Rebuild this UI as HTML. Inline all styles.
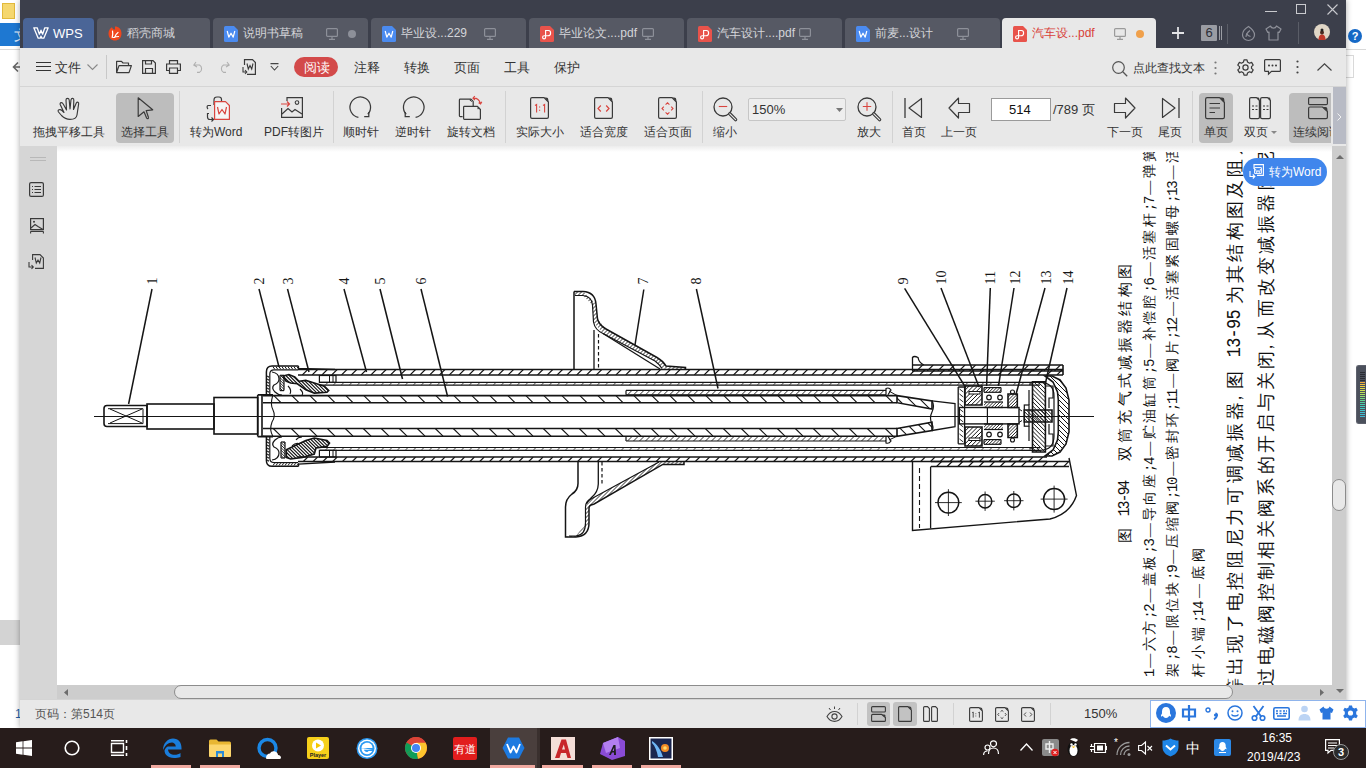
<!DOCTYPE html>
<html><head><meta charset="utf-8">
<style>
*{margin:0;padding:0;box-sizing:border-box}
html,body{width:1366px;height:768px;overflow:hidden;background:#fff;font-family:"Liberation Sans",sans-serif;position:relative}
.a{position:absolute}
.t{position:absolute;white-space:nowrap;line-height:1}
svg{position:absolute;overflow:visible}
/* window */
#win{left:20px;top:0;width:1326px;height:728px;background:#e8e8e8;box-shadow:0 0 6px rgba(0,0,0,.35)}
#title{left:0;top:0;width:1326px;height:48px;background:#3c3f4b}
.tab{position:absolute;top:18px;height:30px;width:155px;background:#565964;border-radius:4px 4px 0 0}
.tab .tx{position:absolute;left:30px;top:8px;font-size:12px;color:#d4d5d9;white-space:nowrap;line-height:14px}
#menu{left:0;top:48px;width:1326px;height:39px;background:#e8e8e8;border-bottom:1px solid #d5d5d5}
.mi{position:absolute;top:61px;font-size:13px;color:#333;line-height:13px;white-space:nowrap}
#tool{left:0;top:87px;width:1326px;height:59px;background:#e8e8e8}
.tl{position:absolute;top:126px;font-size:12px;color:#333;line-height:12px;white-space:nowrap}
.sep{position:absolute;width:1px;background:#d2d2d2}
#side{left:0;top:146px;width:37px;height:553px;background:#d6d6d6}
#doc{left:37px;top:146px;width:1275px;height:539px;background:#fff;overflow:hidden}
#vs{left:1312px;top:146px;width:14px;height:553px;background:#cdcdcd}
#hs{left:37px;top:685px;width:1275px;height:14px;background:#cdcdcd}
#status{left:0;top:699px;width:1326px;height:29px;background:#e8e8e8}
#task{left:0;top:728px;width:1366px;height:40px;background:#271c1b}
</style></head><body>

<!-- desktop leftovers -->
<div class="a" style="left:2px;top:3px;width:13px;height:16px;background:#f5d76e;border:1px solid #e2b93b"></div>
<div class="a" style="left:0;top:23px;width:20px;height:23px;background:#1e78d2"></div>
<div class="t" style="left:14px;top:28px;font-size:14px;color:#e8f0ff">文</div>
<div class="a" style="left:0;top:49px;width:20px;height:1px;background:#d9d9d9"></div>
<svg style="left:12px;top:61px" width="9" height="12" viewBox="0 0 9 12"><path d="M8 6H1.5M6 1.5L1.5 6L6 10.5" stroke="#666" stroke-width="1.6" fill="none"/></svg>
<div class="a" style="left:0;top:620px;width:20px;height:25px;background:#d3d3d3"></div>
<div class="t" style="left:15px;top:708px;font-size:12px;color:#1e5fa8">1</div>
<div class="a" style="left:1346px;top:49px;width:20px;height:1px;background:#d9d9d9"></div>
<div class="a" style="left:1346px;top:55px;width:8px;height:23px;border:1px solid #d9d9d9;border-left:none"></div>
<div class="a" style="left:1348px;top:29px;width:14px;height:14px;border-radius:50%;background:#1569c7;color:#fff;font-size:11px;font-weight:bold;text-align:center;line-height:14px">?</div>
<div class="a" style="left:1356px;top:365px;width:10px;height:59px;background:#4b505c;border-radius:3px 0 0 3px;border:1px solid #5d616c;border-right:none"><div class="a" style="left:3px;top:6px;width:5px;height:1px;background:#2a2c33"></div><div class="a" style="left:3px;top:8px;width:5px;height:1px;background:#2a2c33"></div><div class="a" style="left:3px;top:10px;width:5px;height:1px;background:#2a2c33"></div><div class="a" style="left:3px;top:12px;width:5px;height:1px;background:#2a2c33"></div><div class="a" style="left:3px;top:14px;width:5px;height:1px;background:#2a2c33"></div><div class="a" style="left:3px;top:16px;width:5px;height:1px;background:#f2ab3c"></div><div class="a" style="left:3px;top:18px;width:5px;height:1px;background:#f0c040"></div><div class="a" style="left:3px;top:20px;width:5px;height:1px;background:#ecd040"></div><div class="a" style="left:3px;top:22px;width:5px;height:1px;background:#e0dc48"></div><div class="a" style="left:3px;top:24px;width:5px;height:1px;background:#d0e050"></div><div class="a" style="left:3px;top:26px;width:5px;height:1px;background:#bfe058"></div><div class="a" style="left:3px;top:28px;width:5px;height:1px;background:#a8e060"></div><div class="a" style="left:3px;top:30px;width:5px;height:1px;background:#90dc70"></div><div class="a" style="left:3px;top:32px;width:5px;height:1px;background:#78d880"></div><div class="a" style="left:3px;top:34px;width:5px;height:1px;background:#60d490"></div><div class="a" style="left:3px;top:36px;width:5px;height:1px;background:#50d0a0"></div><div class="a" style="left:3px;top:38px;width:5px;height:1px;background:#48cfb0"></div><div class="a" style="left:3px;top:40px;width:5px;height:1px;background:#40ccb8"></div><div class="a" style="left:3px;top:42px;width:5px;height:1px;background:#40c8c0"></div><div class="a" style="left:3px;top:44px;width:5px;height:1px;background:#40c4c8"></div><div class="a" style="left:3px;top:46px;width:5px;height:1px;background:#40c0d0"></div><div class="a" style="left:3px;top:48px;width:5px;height:1px;background:#40bcd0"></div><div class="a" style="left:3px;top:50px;width:5px;height:1px;background:#40b8d0"></div></div>

<div id="win" class="a">
  <div id="title" class="a"></div>
<div class="tab" style="left:3px;width:71px;background:#4a6597"></div>
<svg style="left:13px;top:27px" width="16" height="12" viewBox="0 0 16 12"><path d="M0.8 0.8H4.2L6.4 7.2L8 3.2L9.6 7.2L11.8 0.8H15.2L10.8 11.2H8.8L8 9.2L7.2 11.2H5.2Z" stroke="#fff" stroke-width="1.3" fill="none" stroke-linejoin="round"/></svg>
<div class="t" style="left:33px;top:27px;font-size:13px;color:#fff;line-height:14px">WPS</div>
<div class="tab" style="left:77px;width:113px"><div class="tx" style="left:30px">稻壳商城</div></div>
<svg style="left:88px;top:26px" width="14" height="15" viewBox="0 0 14 15"><path d="M7 0.5C10.5 0.5 13.5 3 13.5 7.5C13.5 12 10.5 14.5 7 14.5C3.5 14.5 0.5 12 0.5 7.5C0.5 4 2.5 2 4 1.2C4.5 2.8 5.5 3.5 7 3.5Z" fill="#f0461c"/><path d="M4.2 11.5C4.8 9 5 7 4.5 5M6.5 11.5C7.5 9 8.5 7.5 10 6.5M5.5 11.5C7 11 9 10.5 10.5 10.5" stroke="#fff" stroke-width="1.2" fill="none" stroke-linecap="round"/></svg>
<div class="tab" style="left:193px"><div class="tx">说明书草稿</div></div>
<svg style="left:204px;top:26px" width="14" height="16" viewBox="0 0 14 16"><path d="M1.5 0H10L14 4V14.5Q14 16 12.5 16H1.5Q0 16 0 14.5V1.5Q0 0 1.5 0Z" fill="#4b8bf0"/><path d="M3.2 5L4.8 11.2L7 7.2L9.2 11.2L10.8 5" stroke="#fff" stroke-width="1.2" fill="none" stroke-linejoin="round"/></svg>
<div class="tab" style="left:351px"><div class="tx">毕业设...229</div></div>
<svg style="left:362px;top:26px" width="14" height="16" viewBox="0 0 14 16"><path d="M1.5 0H10L14 4V14.5Q14 16 12.5 16H1.5Q0 16 0 14.5V1.5Q0 0 1.5 0Z" fill="#4b8bf0"/><path d="M3.2 5L4.8 11.2L7 7.2L9.2 11.2L10.8 5" stroke="#fff" stroke-width="1.2" fill="none" stroke-linejoin="round"/></svg>
<div class="tab" style="left:509px"><div class="tx">毕业论文....pdf</div></div>
<svg style="left:520px;top:26px" width="14" height="16" viewBox="0 0 14 16"><path d="M1.5 0H10L14 4V14.5Q14 16 12.5 16H1.5Q0 16 0 14.5V1.5Q0 0 1.5 0Z" fill="#e8534b"/><path d="M5.6 11.3V4.5H8.5Q10.6 4.6 10.6 6.9Q10.6 9.7 8 9.7H4.2Q2.6 9.7 2.6 11.3Q2.6 12.9 4.1 12.9Q5.6 12.9 5.6 11.3" stroke="#fff" stroke-width="1.15" fill="none"/></svg>
<div class="tab" style="left:667px"><div class="tx">汽车设计....pdf</div></div>
<svg style="left:678px;top:26px" width="14" height="16" viewBox="0 0 14 16"><path d="M1.5 0H10L14 4V14.5Q14 16 12.5 16H1.5Q0 16 0 14.5V1.5Q0 0 1.5 0Z" fill="#e8534b"/><path d="M5.6 11.3V4.5H8.5Q10.6 4.6 10.6 6.9Q10.6 9.7 8 9.7H4.2Q2.6 9.7 2.6 11.3Q2.6 12.9 4.1 12.9Q5.6 12.9 5.6 11.3" stroke="#fff" stroke-width="1.15" fill="none"/></svg>
<div class="tab" style="left:825px"><div class="tx">前麦...设计</div></div>
<svg style="left:836px;top:26px" width="14" height="16" viewBox="0 0 14 16"><path d="M1.5 0H10L14 4V14.5Q14 16 12.5 16H1.5Q0 16 0 14.5V1.5Q0 0 1.5 0Z" fill="#4b8bf0"/><path d="M3.2 5L4.8 11.2L7 7.2L9.2 11.2L10.8 5" stroke="#fff" stroke-width="1.2" fill="none" stroke-linejoin="round"/></svg>
<svg style="left:306px;top:28px" width="12" height="12" viewBox="0 0 12 12"><rect x="0.6" y="0.6" width="10.8" height="7.8" rx="1" stroke="#8d9099" stroke-width="1.2" fill="none"/><path d="M6 8.5V11M3 11.4H9" stroke="#8d9099" stroke-width="1.2"/></svg>
<div class="a" style="left:328px;top:30px;width:8px;height:8px;border-radius:50%;background:#8d9099"></div>
<svg style="left:464px;top:28px" width="12" height="12" viewBox="0 0 12 12"><rect x="0.6" y="0.6" width="10.8" height="7.8" rx="1" stroke="#8d9099" stroke-width="1.2" fill="none"/><path d="M6 8.5V11M3 11.4H9" stroke="#8d9099" stroke-width="1.2"/></svg>
<svg style="left:622px;top:28px" width="12" height="12" viewBox="0 0 12 12"><rect x="0.6" y="0.6" width="10.8" height="7.8" rx="1" stroke="#8d9099" stroke-width="1.2" fill="none"/><path d="M6 8.5V11M3 11.4H9" stroke="#8d9099" stroke-width="1.2"/></svg>
<svg style="left:779px;top:28px" width="12" height="12" viewBox="0 0 12 12"><rect x="0.6" y="0.6" width="10.8" height="7.8" rx="1" stroke="#8d9099" stroke-width="1.2" fill="none"/><path d="M6 8.5V11M3 11.4H9" stroke="#8d9099" stroke-width="1.2"/></svg>
<svg style="left:937px;top:28px" width="12" height="12" viewBox="0 0 12 12"><rect x="0.6" y="0.6" width="10.8" height="7.8" rx="1" stroke="#8d9099" stroke-width="1.2" fill="none"/><path d="M6 8.5V11M3 11.4H9" stroke="#8d9099" stroke-width="1.2"/></svg>
<div class="tab" style="left:982px;width:154px;background:#e8e8e8"></div>
<svg style="left:993px;top:26px" width="14" height="16" viewBox="0 0 14 16"><path d="M1.5 0H10L14 4V14.5Q14 16 12.5 16H1.5Q0 16 0 14.5V1.5Q0 0 1.5 0Z" fill="#e8534b"/><path d="M5.6 11.3V4.5H8.5Q10.6 4.6 10.6 6.9Q10.6 9.7 8 9.7H4.2Q2.6 9.7 2.6 11.3Q2.6 12.9 4.1 12.9Q5.6 12.9 5.6 11.3" stroke="#fff" stroke-width="1.15" fill="none"/></svg>
<div class="t" style="left:1012px;top:26px;font-size:12px;color:#d8413a;line-height:14px">汽车设...pdf</div>
<svg style="left:1094px;top:28px" width="12" height="12" viewBox="0 0 12 12"><rect x="0.6" y="0.6" width="10.8" height="7.8" rx="1" stroke="#9a9a9a" stroke-width="1.2" fill="none"/><path d="M6 8.5V11M3 11.4H9" stroke="#9a9a9a" stroke-width="1.2"/></svg>
<div class="a" style="left:1116px;top:30px;width:8px;height:8px;border-radius:50%;background:#f0a04b"></div>
<svg style="left:1151px;top:26px" width="14" height="14" viewBox="0 0 14 14"><path d="M7 1V13M1 7H13" stroke="#e3e3e6" stroke-width="1.8"/></svg>
<div class="a" style="left:1181px;top:25px;width:16px;height:16px;background:#9a9ca3;border-radius:1px;color:#2c2e36;font-size:13px;text-align:center;line-height:16px">6</div>
<div class="a" style="left:1199px;top:26px;width:1px;height:14px;background:#9a9ca3"></div>
<div class="a" style="left:1201px;top:26px;width:1px;height:14px;background:#9a9ca3"></div>
<div class="a" style="left:1207px;top:24px;width:1px;height:20px;background:#5a5d67"></div>
<svg style="left:1221px;top:25px" width="15" height="16" viewBox="0 0 15 16"><path d="M7.5 1.5C3 4 1.5 7 1.5 10A6 5.5 0 0 0 13.5 10C13.5 7 12 4.5 7.5 1.5Z" stroke="#8e9099" stroke-width="1.2" fill="none"/><path d="M5 12C5 9 7 7 9 5.5M5.5 8C6 9.5 7 11 9.5 11.5" stroke="#8e9099" stroke-width="1.1" fill="none"/></svg>
<svg style="left:1245px;top:25px" width="17" height="16" viewBox="0 0 17 16"><path d="M5.5 1L1 4L2.8 7.5L4 7V15H13V7L14.2 7.5L16 4L11.5 1C11 2.5 10 3.2 8.5 3.2S6 2.5 5.5 1Z" stroke="#8e9099" stroke-width="1.2" fill="none" stroke-linejoin="round"/></svg>
<div class="a" style="left:1278px;top:22px;width:1px;height:22px;background:#5a5d67"></div>
<svg style="left:1294px;top:24px" width="16" height="16" viewBox="0 0 16 16"><circle cx="8" cy="8" r="8" fill="#e0d6c6"/><path d="M4.5 16C4.5 12 6 10.5 8 10.5S11.5 12 11.5 16Z" fill="#c0392b"/><circle cx="8" cy="8.5" r="2" fill="#4a2a20"/><circle cx="8" cy="6" r="1.5" fill="#222"/></svg>
<div class="a" style="left:1245px;top:11px;width:12px;height:1px;background:#c9cace"></div>
<div class="a" style="left:1276px;top:4px;width:10px;height:10px;border:1px solid #c9cace"></div>
<svg style="left:1307px;top:4px" width="11" height="11" viewBox="0 0 11 11"><path d="M0.5 0.5L10.5 10.5M10.5 0.5L0.5 10.5" stroke="#c9cace" stroke-width="1.1"/></svg>
  <div id="menu" class="a"></div>
<svg style="left:16px;top:62px" width="15" height="10" viewBox="0 0 15 10"><path d="M0 0.5H15M0 4.5H15M0 8.5H15" stroke="#333" stroke-width="1"/></svg>
<div class="mi" style="left:35px">文件</div>
<svg style="left:67px;top:64px" width="11" height="6" viewBox="0 0 11 6"><path d="M0.5 0.5L5.5 5.5L10.5 0.5" stroke="#888" stroke-width="1.1" fill="none"/></svg>
<div class="a" style="left:86px;top:55px;width:1px;height:24px;background:#c8c8c8"></div>
<svg style="left:96px;top:60px" width="16" height="14" viewBox="0 0 16 14"><path d="M0.6 12.6V1.4H5.5L7 3H12.5V5.5M0.6 12.6L3 5.6H15.4L13 12.6Z" stroke="#3a3a3a" stroke-width="1.2" fill="none" stroke-linejoin="round"/></svg>
<svg style="left:122px;top:60px" width="14" height="14" viewBox="0 0 14 14"><path d="M0.6 0.6H11L13.4 3V13.4H0.6Z M3.5 13.4V8.5H10.5V13.4 M3.5 0.6V4H9.5V0.6" stroke="#3a3a3a" stroke-width="1.2" fill="none"/></svg>
<svg style="left:146px;top:60px" width="15" height="14" viewBox="0 0 15 14"><path d="M3.5 4V0.6H11.5V4 M3.5 10.5H0.6V4H14.4V10.5H11.5 M3.5 8V13.4H11.5V8Z" stroke="#3a3a3a" stroke-width="1.2" fill="none"/></svg>
<svg style="left:173px;top:61px" width="12" height="12" viewBox="0 0 12 12"><path d="M3 1L0.8 4L4 6M1 4H6.5A4.3 4.3 0 0 1 6.5 11.4H4" stroke="#b0b0b0" stroke-width="1.1" fill="none"/></svg>
<svg style="left:198px;top:61px" width="12" height="12" viewBox="0 0 12 12"><path d="M9 1L11.2 4L8 6M11 4H5.5A4.3 4.3 0 0 0 5.5 11.4H8" stroke="#b0b0b0" stroke-width="1.1" fill="none"/></svg>
<svg style="left:221px;top:59px" width="16" height="16" viewBox="0 0 16 16"><path d="M3.5 6V0.6H11.5L14.4 3.5V15.4H6 M3.5 1L3.5 6" stroke="#3a3a3a" stroke-width="1.2" fill="none"/><path d="M6 4.5L7.3 10L9 6.5L10.7 10L12 4.5" stroke="#3a3a3a" stroke-width="1.1" fill="none"/><path d="M2 8V13H5.5M4 11L5.8 13L4 15" stroke="#3a3a3a" stroke-width="1.1" fill="none"/></svg>
<svg style="left:250px;top:63px" width="9" height="8" viewBox="0 0 9 8"><path d="M0.5 0.6H8.5M0.8 3L4.5 7L8.2 3" stroke="#444" stroke-width="1.1" fill="none"/></svg>
<div class="a" style="left:274px;top:57px;width:44px;height:20px;border-radius:10px;background:#d34a4a"></div>
<div class="mi" style="left:284px;top:61px;color:#fff">阅读</div>
<div class="mi" style="left:334px">注释</div>
<div class="mi" style="left:384px">转换</div>
<div class="mi" style="left:434px">页面</div>
<div class="mi" style="left:484px">工具</div>
<div class="mi" style="left:534px">保护</div>
<svg style="left:1092px;top:61px" width="16" height="16" viewBox="0 0 16 16"><circle cx="6.5" cy="6.5" r="5.8" stroke="#555" stroke-width="1.2" fill="none"/><path d="M10.8 10.8L15.2 15.2" stroke="#555" stroke-width="1.3"/></svg>
<div class="mi" style="left:1113px;top:62px;font-size:12px;color:#333">点此查找文本</div>
<svg style="left:1194px;top:61px" width="3" height="14" viewBox="0 0 3 14"><circle cx="1.5" cy="1.5" r="1.1" fill="#777"/><circle cx="1.5" cy="7" r="1.1" fill="#777"/><circle cx="1.5" cy="12.5" r="1.1" fill="#777"/></svg>
<svg style="left:1217px;top:59px" width="17" height="17" viewBox="0 0 17 17"><path d="M7 0.8H10L10.5 3L12.5 4.2L14.6 3.4L16.2 6.1L14.5 7.6V9.4L16.2 10.9L14.6 13.6L12.5 12.8L10.5 14L10 16.2H7L6.5 14L4.5 12.8L2.4 13.6L0.8 10.9L2.5 9.4V7.6L0.8 6.1L2.4 3.4L4.5 4.2L6.5 3Z" stroke="#3a3a3a" stroke-width="1.2" fill="none" stroke-linejoin="round"/><circle cx="8.5" cy="8.5" r="2.6" stroke="#3a3a3a" stroke-width="1.2" fill="none"/></svg>
<svg style="left:1244px;top:59px" width="17" height="16" viewBox="0 0 17 16"><path d="M1.5 0.6H15.5Q16.4 0.6 16.4 1.5V11.5Q16.4 12.4 15.5 12.4H7.5L4.5 15.2V12.4H1.5Q0.6 12.4 0.6 11.5V1.5Q0.6 0.6 1.5 0.6Z" stroke="#3a3a3a" stroke-width="1.2" fill="none"/><circle cx="5" cy="6.5" r="1" fill="#3a3a3a"/><circle cx="8.5" cy="6.5" r="1" fill="#3a3a3a"/><circle cx="12" cy="6.5" r="1" fill="#3a3a3a"/></svg>
<svg style="left:1276px;top:60px" width="3" height="14" viewBox="0 0 3 14"><circle cx="1.5" cy="1.5" r="1.1" fill="#444"/><circle cx="1.5" cy="7" r="1.1" fill="#444"/><circle cx="1.5" cy="12.5" r="1.1" fill="#444"/></svg>
<svg style="left:1297px;top:63px" width="15" height="8" viewBox="0 0 15 8"><path d="M0.5 7.5L7.5 0.8L14.5 7.5" stroke="#444" stroke-width="1.2" fill="none"/></svg>
  <div id="tool" class="a"></div>
<div class="a" style="left:96px;top:93px;width:58px;height:50px;border-radius:4px;background:#bdbdbd"></div>
<div class="a" style="left:1179px;top:93px;width:34px;height:50px;border-radius:4px;background:#bdbdbd"></div>
<div class="a" style="left:1269px;top:93px;width:42px;height:50px;border-radius:4px 0 0 4px;background:#bdbdbd"></div>
<svg style="left:37px;top:97px" width="23" height="24" viewBox="0 0 23 24"><path d="M13 22.4C9 22.4 7 21 4.5 18.5L1.5 15Q0.5 13.5 2 12.8Q3.5 12.2 5 13.5L7 15.5L3.2 7.5Q2.8 5.8 4.2 5.6Q5.5 5.5 6.2 7L9.5 13L9 3Q9 1.3 10.5 1.3Q12 1.3 12.2 3L13 12L14 2.8Q14.3 1.3 15.6 1.4Q17 1.6 16.8 3.2L16.5 12.5L19.3 6Q20 4.8 21 5.2Q22 5.8 21.6 7.2L20 18C19.5 21 16.5 22.4 13 22.4Z" stroke="#3a3a3a" stroke-width="1.15" fill="none" stroke-linejoin="round"/></svg>
<div class="tl" style="left:13px;">拖拽平移工具</div>
<svg style="left:117px;top:97px" width="17" height="23" viewBox="0 0 17 23"><path d="M1.2 0.8V19.5L7 14.8L9.6 21Q10.2 22 11 21.6Q11.8 21.2 11.4 20.2L9.2 13.6L15.7 12.8Z" stroke="#3a3a3a" stroke-width="1.2" fill="none" stroke-linejoin="round"/></svg>
<div class="tl" style="left:101px;">选择工具</div>
<div class="sep" style="left:159px;top:91px;height:52px"></div>
<svg style="left:185px;top:96px" width="26" height="25" viewBox="0 0 26 25"><path d="M9 9V4C9 2 10 1 12 1H14C15.5 1 16.5 2 16.5 3.5V5" stroke="#3a3a3a" stroke-width="1.2" fill="none"/><path d="M4 17.5H2.5V21C2.5 22.5 3.5 23.5 5 23.5H8M6.5 21.5L8.5 23.5L6.5 25.5" stroke="#3a3a3a" stroke-width="1.2" fill="none"/><path d="M3 13C1.8 12 1.8 10 3 9.5H6" stroke="#3a3a3a" stroke-width="1.2" fill="none"/><path d="M9.6 5.6H20.5L24.4 9.5V23.4H9.6Z" stroke="#d9453f" stroke-width="1.2" fill="#f5f5f5" stroke-linejoin="round"/><path d="M12.5 11L14 18L17 13.5L20 18L21.5 11" stroke="#d9453f" stroke-width="1.2" fill="none" stroke-linejoin="round"/></svg>
<div class="tl" style="left:170px;">转为Word</div>
<svg style="left:261px;top:97px" width="22" height="21" viewBox="0 0 22 21"><path d="M6 4V0.6H21.4V20.4H0.6V11" stroke="#3a3a3a" stroke-width="1.2" fill="none"/><circle cx="16" cy="5.6" r="1.8" stroke="#3a3a3a" stroke-width="1.1" fill="none"/><path d="M1 17L7 11.5L11 15L14 12.5L21 17" stroke="#3a3a3a" stroke-width="1.2" fill="none"/><path d="M0 7H8.5M6 4.5L8.5 7L6 9.5" stroke="#d9453f" stroke-width="1.2" fill="none"/></svg>
<div class="tl" style="left:244px;">PDF转图片</div>
<div class="sep" style="left:313px;top:91px;height:52px"></div>
<svg style="left:329px;top:96px" width="24" height="24" viewBox="0 0 24 24"><path d="M9.4 21.4A10.3 10.3 0 1 1 18.8 18.3" stroke="#3a3a3a" stroke-width="1.25" fill="none"/><path d="M15.2 20.7H19.8V16" stroke="#3a3a3a" stroke-width="1.25" fill="none"/></svg>
<div class="tl" style="left:323px;">顺时针</div>
<svg style="left:381px;top:96px" width="24" height="24" viewBox="0 0 24 24"><path d="M14.6 21.4A10.3 10.3 0 1 0 5.2 18.3" stroke="#3a3a3a" stroke-width="1.25" fill="none"/><path d="M8.8 20.7H4.2V16" stroke="#3a3a3a" stroke-width="1.25" fill="none"/></svg>
<div class="tl" style="left:375px;">逆时针</div>
<svg style="left:438px;top:95px" width="26" height="26" viewBox="0 0 26 26"><path d="M4.6 21.6H2.2Q1.4 21.6 1.4 20.8V5Q1.4 4.2 2.2 4.2H13L15.2 6.4V11" stroke="#3a3a3a" stroke-width="1.2" fill="none" stroke-linejoin="round"/><path d="M6 11.4H19.5L22.4 14.3V23.6Q22.4 24.4 21.6 24.4H6.4Q5.6 24.4 5.6 23.6V12.2Q5.6 11.4 6.4 11.4Z" stroke="#3a3a3a" stroke-width="1.2" fill="#e8e8e8" stroke-linejoin="round"/><path d="M13 5H11.8L13.8 6.6M20 14.2V12.6L21.6 14.4" stroke="#3a3a3a" stroke-width="1" fill="none"/><path d="M15 3.2Q20.5 2.5 22.5 8.6M16.8 1.2L15 3.2L17 5M20.6 7.8L22.6 9L23.8 6.8" stroke="#d9453f" stroke-width="1.2" fill="none"/></svg>
<div class="tl" style="left:427px;">旋转文档</div>
<div class="sep" style="left:485px;top:91px;height:52px"></div>
<svg style="left:510px;top:97px" width="19" height="22" viewBox="0 0 19 22"><path d="M2 0.6H14L18.4 5V20Q18.4 21.4 17 21.4H2Q0.6 21.4 0.6 20V2Q0.6 0.6 2 0.6Z" stroke="#3a3a3a" stroke-width="1.2" fill="none" stroke-linejoin="round"/><path d="M14.2 0.6L18.4 4.8V3Q18.4 0.6 16 0.6Z" fill="#3a3a3a"/><path d="M5 8.5L6.6 7.5V15.5M13 8.5L14.6 7.5V15.5" stroke="#d9453f" stroke-width="1.1" fill="none"/><path d="M9.6 9.6V10.6M9.6 12.8V13.8" stroke="#d9453f" stroke-width="1.2"/></svg>
<div class="tl" style="left:496px;">实际大小</div>
<svg style="left:574px;top:97px" width="19" height="22" viewBox="0 0 19 22"><path d="M2 0.6H14L18.4 5V20Q18.4 21.4 17 21.4H2Q0.6 21.4 0.6 20V2Q0.6 0.6 2 0.6Z" stroke="#3a3a3a" stroke-width="1.2" fill="none" stroke-linejoin="round"/><path d="M14.2 0.6L18.4 4.8V3Q18.4 0.6 16 0.6Z" fill="#3a3a3a"/><path d="M6.8 8.5L4 11.5L6.8 14.5M12.2 8.5L15 11.5L12.2 14.5" stroke="#d9453f" stroke-width="1.2" fill="none"/></svg>
<div class="tl" style="left:560px;">适合宽度</div>
<svg style="left:638px;top:97px" width="19" height="22" viewBox="0 0 19 22"><path d="M2 0.6H14L18.4 5V20Q18.4 21.4 17 21.4H2Q0.6 21.4 0.6 20V2Q0.6 0.6 2 0.6Z" stroke="#3a3a3a" stroke-width="1.2" fill="none" stroke-linejoin="round"/><path d="M14.2 0.6L18.4 4.8V3Q18.4 0.6 16 0.6Z" fill="#3a3a3a"/><path d="M7.6 7.6L9.5 5.8L11.4 7.6M7.6 15.4L9.5 17.2L11.4 15.4M5.8 9.6L4 11.5L5.8 13.4M13.2 9.6L15 11.5L13.2 13.4" stroke="#d9453f" stroke-width="1.1" fill="none"/></svg>
<div class="tl" style="left:624px;">适合页面</div>
<div class="sep" style="left:682px;top:91px;height:52px"></div>
<svg style="left:693px;top:97px" width="25" height="24" viewBox="0 0 25 24"><circle cx="10" cy="10" r="9" stroke="#3a3a3a" stroke-width="1.3" fill="none"/><path d="M16.8 16.8L22.6 22.6" stroke="#3a3a3a" stroke-width="3.4" stroke-linecap="round"/><path d="M16.8 16.8L22.6 22.6" stroke="#e8e8e8" stroke-width="1.2" stroke-linecap="round"/><path d="M5.8 9.5H14.2" stroke="#d9453f" stroke-width="1.1"/></svg>
<div class="tl" style="left:693px;">缩小</div>
<div class="a" style="left:728px;top:98px;width:98px;height:23px;border:1px solid #c6c6c6;border-radius:2px;background:#eeeeee"></div>
<div class="t" style="left:732px;top:103px;font-size:13px;color:#333">150%</div>
<svg style="left:816px;top:108px" width="7" height="4" viewBox="0 0 7 4"><path d="M0 0H7L3.5 4Z" fill="#777"/></svg>
<svg style="left:837px;top:97px" width="25" height="24" viewBox="0 0 25 24"><circle cx="10" cy="10" r="9" stroke="#3a3a3a" stroke-width="1.3" fill="none"/><path d="M16.8 16.8L22.6 22.6" stroke="#3a3a3a" stroke-width="3.4" stroke-linecap="round"/><path d="M16.8 16.8L22.6 22.6" stroke="#e8e8e8" stroke-width="1.2" stroke-linecap="round"/><path d="M5.8 9.5H14.2M10 5.3V13.7" stroke="#d9453f" stroke-width="1.1"/></svg>
<div class="tl" style="left:837px;">放大</div>
<div class="sep" style="left:872px;top:91px;height:52px"></div>
<svg style="left:884px;top:97px" width="19" height="22" viewBox="0 0 19 22"><path d="M1 1V21" stroke="#3a3a3a" stroke-width="1.3"/><path d="M17.5 1.5V20.5L5 11Z" stroke="#3a3a3a" stroke-width="1.2" fill="none" stroke-linejoin="round"/></svg>
<div class="tl" style="left:882px;">首页</div>
<svg style="left:928px;top:97px" width="23" height="22" viewBox="0 0 23 22"><path d="M10.5 1L1 11L10.5 21V15.5H21.5V6.5H10.5Z" stroke="#3a3a3a" stroke-width="1.2" fill="none" stroke-linejoin="round"/></svg>
<div class="tl" style="left:921px;">上一页</div>
<div class="a" style="left:971px;top:98px;width:60px;height:23px;border:1px solid #9a9a9a;background:#fff"></div>
<div class="t" style="left:989px;top:103px;font-size:13px;color:#111">514</div>
<div class="t" style="left:1033px;top:103px;font-size:13px;color:#333">/789 页</div>
<svg style="left:1093px;top:97px" width="23" height="22" viewBox="0 0 23 22"><path d="M12.5 1L22 11L12.5 21V15.5H1.5V6.5H12.5Z" stroke="#3a3a3a" stroke-width="1.2" fill="none" stroke-linejoin="round"/></svg>
<div class="tl" style="left:1087px;">下一页</div>
<svg style="left:1141px;top:97px" width="19" height="22" viewBox="0 0 19 22"><path d="M18 1V21" stroke="#3a3a3a" stroke-width="1.3"/><path d="M1.5 1.5V20.5L14 11Z" stroke="#3a3a3a" stroke-width="1.2" fill="none" stroke-linejoin="round"/></svg>
<div class="tl" style="left:1138px;">尾页</div>
<div class="sep" style="left:1172px;top:91px;height:52px"></div>
<svg style="left:1185px;top:97px" width="20" height="23" viewBox="0 0 20 23"><path d="M2.2 0.6H14.5L19.4 5.5V20Q19.4 21.6 17.8 21.6H2.2Q0.6 21.6 0.6 20V2.2Q0.6 0.6 2.2 0.6Z" stroke="#3a3a3a" stroke-width="1.2" fill="none" stroke-linejoin="round"/><path d="M14.8 0.6L19.4 5.2V3Q19.4 0.6 17 0.6Z" fill="#3a3a3a"/><path d="M4.5 6.5H15M4.5 11H15M4.5 15.5H10" stroke="#3a3a3a" stroke-width="1"/></svg>
<div class="tl" style="left:1184px;">单页</div>
<svg style="left:1229px;top:97px" width="22" height="23" viewBox="0 0 22 23"><path d="M2 0.6H7.5L10.4 3.5V20.2Q10.4 21.6 9 21.6H2Q0.6 21.6 0.6 20.2V2Q0.6 0.6 2 0.6Z M13 0.6H18.5L21.4 3.5V20.2Q21.4 21.6 20 21.6H13Q11.6 21.6 11.6 20.2V2Q11.6 0.6 13 0.6Z" stroke="#3a3a3a" stroke-width="1.2" fill="none" stroke-linejoin="round"/><path d="M7.8 0.6L10.4 3.2V2Q10.4 0.6 9 0.6Z M18.8 0.6L21.4 3.2V2Q21.4 0.6 20 0.6Z" fill="#3a3a3a"/><path d="M3 9H5M3 12.5H5M6.5 9H8.5M6.5 12.5H8.5M14 9H16M14 12.5H16M17.5 9H19.5M17.5 12.5H19.5" stroke="#3a3a3a" stroke-width="1"/></svg>
<div class="tl" style="left:1224px;">双页</div>
<svg style="left:1251px;top:131px" width="6" height="3" viewBox="0 0 6 3"><path d="M0 0H6L3 3Z" fill="#888"/></svg>
<svg style="left:1288px;top:97px" width="20" height="23" viewBox="0 0 20 23"><rect x="0.6" y="0.6" width="18.8" height="7" rx="1.2" stroke="#3a3a3a" stroke-width="1.2" fill="none"/><path d="M2 10H14.5L19.4 14.5V20.2Q19.4 21.6 18 21.6H2Q0.6 21.6 0.6 20.2V11.4Q0.6 10 2 10Z" stroke="#3a3a3a" stroke-width="1.2" fill="none" stroke-linejoin="round"/><path d="M14.8 10L19.4 14.2V12Q19.4 10 17.5 10Z" fill="#3a3a3a"/></svg>
<div class="a" style="left:1269px;top:120px;width:42px;height:23px;overflow:hidden"><div class="tl" style="left:4px;top:6px">连续阅读</div></div>
<div class="a" style="left:1313px;top:87px;width:13px;height:57px;background:#b8bbc5"></div>
<svg style="left:1317px;top:113px" width="5" height="8" viewBox="0 0 5 8"><path d="M0.5 0.5L4 4L0.5 7.5" stroke="#f2f2f2" stroke-width="1" fill="none"/></svg>
  <div id="side" class="a"></div>
  <div id="doc" class="a"><!--DOCSTART--><svg style="left:-57px;top:-146px" width="1366" height="768" viewBox="0 0 1366 768"><path d="M94 416.5L1094 416.5" stroke="#151515" stroke-width="1.2" />
<path d="M107 405.5H147V426.5H107Q104 426.5 104 423.5V408.5Q104 405.5 107 405.5Z" stroke="#151515" stroke-width="1.6" fill="none" />
<path d="M108 408.7L143 408.7" stroke="#151515" stroke-width="1.0" />
<path d="M108 423.6L143 423.6" stroke="#151515" stroke-width="1.0" />
<path d="M143 408.7L143 423.6" stroke="#151515" stroke-width="1.0" />
<path d="M110 409L142 423" stroke="#151515" stroke-width="1.0" />
<path d="M110 423L142 409" stroke="#151515" stroke-width="1.0" />
<rect x="147" y="404" width="67" height="25" stroke="#151515" stroke-width="1.6" fill="none"/>
<rect x="214" y="397.5" width="43.69999999999999" height="36.5" stroke="#151515" stroke-width="1.6" fill="none"/>
<path d="M257.7 394.9H273M257.7 436.6H273M257.7 394.9V436.6M262 395V436.5" stroke="#151515" stroke-width="1.6" fill="none" />
<path d="M272.8 395Q270 405 273 410Q276 416 272 422Q269 430 273 436.5" stroke="#151515" stroke-width="1.1" fill="none" />
<clipPath id="c1"><rect x="263" y="395.6" width="634" height="7.099999999999966"/></clipPath>
<path d="M255.9 395.6L263.0 402.7 M273.9 395.6L281.0 402.7 M291.9 395.6L299.0 402.7 M309.9 395.6L317.0 402.7 M327.9 395.6L335.0 402.7 M345.9 395.6L353.0 402.7 M363.9 395.6L371.0 402.7 M381.9 395.6L389.0 402.7 M399.9 395.6L407.0 402.7 M417.9 395.6L425.0 402.7 M435.9 395.6L443.0 402.7 M453.9 395.6L461.0 402.7 M471.9 395.6L479.0 402.7 M489.9 395.6L497.0 402.7 M507.9 395.6L515.0 402.7 M525.9 395.6L533.0 402.7 M543.9 395.6L551.0 402.7 M561.9 395.6L569.0 402.7 M579.9 395.6L587.0 402.7 M597.9 395.6L605.0 402.7 M615.9 395.6L623.0 402.7 M633.9 395.6L641.0 402.7 M651.9 395.6L659.0 402.7 M669.9 395.6L677.0 402.7 M687.9 395.6L695.0 402.7 M705.9 395.6L713.0 402.7 M723.9 395.6L731.0 402.7 M741.9 395.6L749.0 402.7 M759.9 395.6L767.0 402.7 M777.9 395.6L785.0 402.7 M795.9 395.6L803.0 402.7 M813.9 395.6L821.0 402.7 M831.9 395.6L839.0 402.7 M849.9 395.6L857.0 402.7 M867.9 395.6L875.0 402.7 M885.9 395.6L893.0 402.7 M903.9 395.6L911.0 402.7" stroke="#151515" stroke-width="1.1" clip-path="url(#c1)"/>
<path d="M263 395.6L897 395.6" stroke="#151515" stroke-width="1.6" />
<path d="M263 402.7L897 402.7" stroke="#151515" stroke-width="1.6" />
<clipPath id="c2"><rect x="263" y="428.5" width="634" height="7.699999999999989"/></clipPath>
<path d="M255.3 428.5L263.0 436.2 M273.3 428.5L281.0 436.2 M291.3 428.5L299.0 436.2 M309.3 428.5L317.0 436.2 M327.3 428.5L335.0 436.2 M345.3 428.5L353.0 436.2 M363.3 428.5L371.0 436.2 M381.3 428.5L389.0 436.2 M399.3 428.5L407.0 436.2 M417.3 428.5L425.0 436.2 M435.3 428.5L443.0 436.2 M453.3 428.5L461.0 436.2 M471.3 428.5L479.0 436.2 M489.3 428.5L497.0 436.2 M507.3 428.5L515.0 436.2 M525.3 428.5L533.0 436.2 M543.3 428.5L551.0 436.2 M561.3 428.5L569.0 436.2 M579.3 428.5L587.0 436.2 M597.3 428.5L605.0 436.2 M615.3 428.5L623.0 436.2 M633.3 428.5L641.0 436.2 M651.3 428.5L659.0 436.2 M669.3 428.5L677.0 436.2 M687.3 428.5L695.0 436.2 M705.3 428.5L713.0 436.2 M723.3 428.5L731.0 436.2 M741.3 428.5L749.0 436.2 M759.3 428.5L767.0 436.2 M777.3 428.5L785.0 436.2 M795.3 428.5L803.0 436.2 M813.3 428.5L821.0 436.2 M831.3 428.5L839.0 436.2 M849.3 428.5L857.0 436.2 M867.3 428.5L875.0 436.2 M885.3 428.5L893.0 436.2 M903.3 428.5L911.0 436.2" stroke="#151515" stroke-width="1.1" clip-path="url(#c2)"/>
<path d="M263 428.5L897 428.5" stroke="#151515" stroke-width="1.6" />
<path d="M263 436.2L897 436.2" stroke="#151515" stroke-width="1.6" />
<clipPath id="c3"><path d="M897 395.6 L932 400.9 L932 409.1 L897 402.7Z"/></clipPath>
<path d="M883.5 395.6L897.0 409.1 M894.5 395.6L908.0 409.1 M905.5 395.6L919.0 409.1 M916.5 395.6L930.0 409.1 M927.5 395.6L941.0 409.1 M938.5 395.6L952.0 409.1" stroke="#151515" stroke-width="1.1" clip-path="url(#c3)"/>
<path d="M897 395.6 L932 400.9 L932 409.1 L897 402.7Z" stroke="#151515" stroke-width="1.6" fill="none" />
<clipPath id="c4"><path d="M897 428.5 L932 422.3 L932 430.5 L897 436.2Z"/></clipPath>
<path d="M883.1 422.3L897.0 436.2 M894.1 422.3L908.0 436.2 M905.1 422.3L919.0 436.2 M916.1 422.3L930.0 436.2 M927.1 422.3L941.0 436.2 M938.1 422.3L952.0 436.2" stroke="#151515" stroke-width="1.1" clip-path="url(#c4)"/>
<path d="M897 428.5 L932 422.3 L932 430.5 L897 436.2Z" stroke="#151515" stroke-width="1.6" fill="none" />
<path d="M932 400.9L955 403.6V426.7L932 430.5" stroke="#151515" stroke-width="1.3" fill="none" />
<path d="M932 400.9Q935 406 932 412Q929 418 932 424Q934 428 932 430.5" stroke="#151515" stroke-width="1.2" fill="none" />
<clipPath id="c5"><rect x="298" y="369.5" width="765" height="5.5"/></clipPath>
<path d="M292.5 375L298.0 369.5 M302.3 375L307.8 369.5 M312.1 375L317.6 369.5 M321.9 375L327.4 369.5 M331.7 375L337.2 369.5 M341.5 375L347.0 369.5 M351.3 375L356.8 369.5 M361.1 375L366.6 369.5 M370.9 375L376.4 369.5 M380.7 375L386.2 369.5 M390.5 375L396.0 369.5 M400.3 375L405.8 369.5 M410.1 375L415.6 369.5 M419.9 375L425.4 369.5 M429.7 375L435.2 369.5 M439.5 375L445.0 369.5 M449.3 375L454.8 369.5 M459.1 375L464.6 369.5 M468.9 375L474.4 369.5 M478.7 375L484.2 369.5 M488.5 375L494.0 369.5 M498.3 375L503.8 369.5 M508.1 375L513.6 369.5 M517.9 375L523.4 369.5 M527.7 375L533.2 369.5 M537.5 375L543.0 369.5 M547.3 375L552.8 369.5 M557.1 375L562.6 369.5 M566.9 375L572.4 369.5 M576.7 375L582.2 369.5 M586.5 375L592.0 369.5 M596.3 375L601.8 369.5 M606.1 375L611.6 369.5 M615.9 375L621.4 369.5 M625.7 375L631.2 369.5 M635.5 375L641.0 369.5 M645.3 375L650.8 369.5 M655.1 375L660.6 369.5 M664.9 375L670.4 369.5 M674.7 375L680.2 369.5 M684.5 375L690.0 369.5 M694.3 375L699.8 369.5 M704.1 375L709.6 369.5 M713.9 375L719.4 369.5 M723.7 375L729.2 369.5 M733.5 375L739.0 369.5 M743.3 375L748.8 369.5 M753.1 375L758.6 369.5 M762.9 375L768.4 369.5 M772.7 375L778.2 369.5 M782.5 375L788.0 369.5 M792.3 375L797.8 369.5 M802.1 375L807.6 369.5 M811.9 375L817.4 369.5 M821.7 375L827.2 369.5 M831.5 375L837.0 369.5 M841.3 375L846.8 369.5 M851.1 375L856.6 369.5 M860.9 375L866.4 369.5 M870.7 375L876.2 369.5 M880.5 375L886.0 369.5 M890.3 375L895.8 369.5 M900.1 375L905.6 369.5 M909.9 375L915.4 369.5 M919.7 375L925.2 369.5 M929.5 375L935.0 369.5 M939.3 375L944.8 369.5 M949.1 375L954.6 369.5 M958.9 375L964.4 369.5 M968.7 375L974.2 369.5 M978.5 375L984.0 369.5 M988.3 375L993.8 369.5 M998.1 375L1003.6 369.5 M1007.9 375L1013.4 369.5 M1017.7 375L1023.2 369.5 M1027.5 375L1033.0 369.5 M1037.3 375L1042.8 369.5 M1047.1 375L1052.6 369.5 M1056.9 375L1062.4 369.5 M1066.7 375L1072.2 369.5" stroke="#151515" stroke-width="1.1" clip-path="url(#c5)"/>
<path d="M298 369.5L1063 369.5" stroke="#151515" stroke-width="1.6" />
<path d="M298 375L1063 375" stroke="#151515" stroke-width="1.6" />
<clipPath id="c6"><rect x="298" y="457" width="749" height="4.5"/></clipPath>
<path d="M293.5 461.5L298.0 457 M303.3 461.5L307.8 457 M313.1 461.5L317.6 457 M322.9 461.5L327.4 457 M332.7 461.5L337.2 457 M342.5 461.5L347.0 457 M352.3 461.5L356.8 457 M362.1 461.5L366.6 457 M371.9 461.5L376.4 457 M381.7 461.5L386.2 457 M391.5 461.5L396.0 457 M401.3 461.5L405.8 457 M411.1 461.5L415.6 457 M420.9 461.5L425.4 457 M430.7 461.5L435.2 457 M440.5 461.5L445.0 457 M450.3 461.5L454.8 457 M460.1 461.5L464.6 457 M469.9 461.5L474.4 457 M479.7 461.5L484.2 457 M489.5 461.5L494.0 457 M499.3 461.5L503.8 457 M509.1 461.5L513.6 457 M518.9 461.5L523.4 457 M528.7 461.5L533.2 457 M538.5 461.5L543.0 457 M548.3 461.5L552.8 457 M558.1 461.5L562.6 457 M567.9 461.5L572.4 457 M577.7 461.5L582.2 457 M587.5 461.5L592.0 457 M597.3 461.5L601.8 457 M607.1 461.5L611.6 457 M616.9 461.5L621.4 457 M626.7 461.5L631.2 457 M636.5 461.5L641.0 457 M646.3 461.5L650.8 457 M656.1 461.5L660.6 457 M665.9 461.5L670.4 457 M675.7 461.5L680.2 457 M685.5 461.5L690.0 457 M695.3 461.5L699.8 457 M705.1 461.5L709.6 457 M714.9 461.5L719.4 457 M724.7 461.5L729.2 457 M734.5 461.5L739.0 457 M744.3 461.5L748.8 457 M754.1 461.5L758.6 457 M763.9 461.5L768.4 457 M773.7 461.5L778.2 457 M783.5 461.5L788.0 457 M793.3 461.5L797.8 457 M803.1 461.5L807.6 457 M812.9 461.5L817.4 457 M822.7 461.5L827.2 457 M832.5 461.5L837.0 457 M842.3 461.5L846.8 457 M852.1 461.5L856.6 457 M861.9 461.5L866.4 457 M871.7 461.5L876.2 457 M881.5 461.5L886.0 457 M891.3 461.5L895.8 457 M901.1 461.5L905.6 457 M910.9 461.5L915.4 457 M920.7 461.5L925.2 457 M930.5 461.5L935.0 457 M940.3 461.5L944.8 457 M950.1 461.5L954.6 457 M959.9 461.5L964.4 457 M969.7 461.5L974.2 457 M979.5 461.5L984.0 457 M989.3 461.5L993.8 457 M999.1 461.5L1003.6 457 M1008.9 461.5L1013.4 457 M1018.7 461.5L1023.2 457 M1028.5 461.5L1033.0 457 M1038.3 461.5L1042.8 457 M1048.1 461.5L1052.6 457" stroke="#151515" stroke-width="1.1" clip-path="url(#c6)"/>
<path d="M298 457L1047 457" stroke="#151515" stroke-width="1.6" />
<path d="M298 461.5L1047 461.5" stroke="#151515" stroke-width="1.6" />
<clipPath id="c7"><rect x="912" y="365" width="151" height="6"/></clipPath>
<path d="M906.0 371L912.0 365 M916.6 371L922.6 365 M927.2 371L933.2 365 M937.8 371L943.8 365 M948.4 371L954.4 365 M959.0 371L965.0 365 M969.6 371L975.6 365 M980.2 371L986.2 365 M990.8 371L996.8 365 M1001.4 371L1007.4 365 M1012.0 371L1018.0 365 M1022.6 371L1028.6 365 M1033.2 371L1039.2 365 M1043.8 371L1049.8 365 M1054.4 371L1060.4 365 M1065.0 371L1071.0 365" stroke="#151515" stroke-width="1.1" clip-path="url(#c7)"/>
<path d="M912 365L1063 365" stroke="#151515" stroke-width="1.6" />
<path d="M912 371L1063 371" stroke="#151515" stroke-width="1.6" />
<clipPath id="c8"><rect x="931" y="461.5" width="138" height="5.0"/></clipPath>
<path d="M926.0 466.5L931.0 461.5 M936.6 466.5L941.6 461.5 M947.2 466.5L952.2 461.5 M957.8 466.5L962.8 461.5 M968.4 466.5L973.4 461.5 M979.0 466.5L984.0 461.5 M989.6 466.5L994.6 461.5 M1000.2 466.5L1005.2 461.5 M1010.8 466.5L1015.8 461.5 M1021.4 466.5L1026.4 461.5 M1032.0 466.5L1037.0 461.5 M1042.6 466.5L1047.6 461.5 M1053.2 466.5L1058.2 461.5 M1063.8 466.5L1068.8 461.5" stroke="#151515" stroke-width="1.1" clip-path="url(#c8)"/>
<path d="M931 461.5L1069 461.5" stroke="#151515" stroke-width="1.6" />
<path d="M931 466.5L1069 466.5" stroke="#151515" stroke-width="1.6" />
<path d="M1063 365L1063 375" stroke="#151515" stroke-width="1.6" />
<path d="M912.5 371V357.5Q914 355.5 918 357.5Q919 363 924 365" stroke="#151515" stroke-width="1.3" fill="none" />
<clipPath id="c9"><rect x="320" y="382.4" width="720" height="2.8000000000000114"/></clipPath>
<path d="M317.2 385.2L320.0 382.4 M325.2 385.2L328.0 382.4 M333.2 385.2L336.0 382.4 M341.2 385.2L344.0 382.4 M349.2 385.2L352.0 382.4 M357.2 385.2L360.0 382.4 M365.2 385.2L368.0 382.4 M373.2 385.2L376.0 382.4 M381.2 385.2L384.0 382.4 M389.2 385.2L392.0 382.4 M397.2 385.2L400.0 382.4 M405.2 385.2L408.0 382.4 M413.2 385.2L416.0 382.4 M421.2 385.2L424.0 382.4 M429.2 385.2L432.0 382.4 M437.2 385.2L440.0 382.4 M445.2 385.2L448.0 382.4 M453.2 385.2L456.0 382.4 M461.2 385.2L464.0 382.4 M469.2 385.2L472.0 382.4 M477.2 385.2L480.0 382.4 M485.2 385.2L488.0 382.4 M493.2 385.2L496.0 382.4 M501.2 385.2L504.0 382.4 M509.2 385.2L512.0 382.4 M517.2 385.2L520.0 382.4 M525.2 385.2L528.0 382.4 M533.2 385.2L536.0 382.4 M541.2 385.2L544.0 382.4 M549.2 385.2L552.0 382.4 M557.2 385.2L560.0 382.4 M565.2 385.2L568.0 382.4 M573.2 385.2L576.0 382.4 M581.2 385.2L584.0 382.4 M589.2 385.2L592.0 382.4 M597.2 385.2L600.0 382.4 M605.2 385.2L608.0 382.4 M613.2 385.2L616.0 382.4 M621.2 385.2L624.0 382.4 M629.2 385.2L632.0 382.4 M637.2 385.2L640.0 382.4 M645.2 385.2L648.0 382.4 M653.2 385.2L656.0 382.4 M661.2 385.2L664.0 382.4 M669.2 385.2L672.0 382.4 M677.2 385.2L680.0 382.4 M685.2 385.2L688.0 382.4 M693.2 385.2L696.0 382.4 M701.2 385.2L704.0 382.4 M709.2 385.2L712.0 382.4 M717.2 385.2L720.0 382.4 M725.2 385.2L728.0 382.4 M733.2 385.2L736.0 382.4 M741.2 385.2L744.0 382.4 M749.2 385.2L752.0 382.4 M757.2 385.2L760.0 382.4 M765.2 385.2L768.0 382.4 M773.2 385.2L776.0 382.4 M781.2 385.2L784.0 382.4 M789.2 385.2L792.0 382.4 M797.2 385.2L800.0 382.4 M805.2 385.2L808.0 382.4 M813.2 385.2L816.0 382.4 M821.2 385.2L824.0 382.4 M829.2 385.2L832.0 382.4 M837.2 385.2L840.0 382.4 M845.2 385.2L848.0 382.4 M853.2 385.2L856.0 382.4 M861.2 385.2L864.0 382.4 M869.2 385.2L872.0 382.4 M877.2 385.2L880.0 382.4 M885.2 385.2L888.0 382.4 M893.2 385.2L896.0 382.4 M901.2 385.2L904.0 382.4 M909.2 385.2L912.0 382.4 M917.2 385.2L920.0 382.4 M925.2 385.2L928.0 382.4 M933.2 385.2L936.0 382.4 M941.2 385.2L944.0 382.4 M949.2 385.2L952.0 382.4 M957.2 385.2L960.0 382.4 M965.2 385.2L968.0 382.4 M973.2 385.2L976.0 382.4 M981.2 385.2L984.0 382.4 M989.2 385.2L992.0 382.4 M997.2 385.2L1000.0 382.4 M1005.2 385.2L1008.0 382.4 M1013.2 385.2L1016.0 382.4 M1021.2 385.2L1024.0 382.4 M1029.2 385.2L1032.0 382.4 M1037.2 385.2L1040.0 382.4" stroke="#151515" stroke-width="0.8" clip-path="url(#c9)"/>
<path d="M320 382.4L1040 382.4" stroke="#151515" stroke-width="1.2" />
<path d="M320 385.2L1040 385.2" stroke="#151515" stroke-width="1.2" />
<clipPath id="c10"><rect x="320" y="447.5" width="720" height="2.8000000000000114"/></clipPath>
<path d="M317.2 450.3L320.0 447.5 M325.2 450.3L328.0 447.5 M333.2 450.3L336.0 447.5 M341.2 450.3L344.0 447.5 M349.2 450.3L352.0 447.5 M357.2 450.3L360.0 447.5 M365.2 450.3L368.0 447.5 M373.2 450.3L376.0 447.5 M381.2 450.3L384.0 447.5 M389.2 450.3L392.0 447.5 M397.2 450.3L400.0 447.5 M405.2 450.3L408.0 447.5 M413.2 450.3L416.0 447.5 M421.2 450.3L424.0 447.5 M429.2 450.3L432.0 447.5 M437.2 450.3L440.0 447.5 M445.2 450.3L448.0 447.5 M453.2 450.3L456.0 447.5 M461.2 450.3L464.0 447.5 M469.2 450.3L472.0 447.5 M477.2 450.3L480.0 447.5 M485.2 450.3L488.0 447.5 M493.2 450.3L496.0 447.5 M501.2 450.3L504.0 447.5 M509.2 450.3L512.0 447.5 M517.2 450.3L520.0 447.5 M525.2 450.3L528.0 447.5 M533.2 450.3L536.0 447.5 M541.2 450.3L544.0 447.5 M549.2 450.3L552.0 447.5 M557.2 450.3L560.0 447.5 M565.2 450.3L568.0 447.5 M573.2 450.3L576.0 447.5 M581.2 450.3L584.0 447.5 M589.2 450.3L592.0 447.5 M597.2 450.3L600.0 447.5 M605.2 450.3L608.0 447.5 M613.2 450.3L616.0 447.5 M621.2 450.3L624.0 447.5 M629.2 450.3L632.0 447.5 M637.2 450.3L640.0 447.5 M645.2 450.3L648.0 447.5 M653.2 450.3L656.0 447.5 M661.2 450.3L664.0 447.5 M669.2 450.3L672.0 447.5 M677.2 450.3L680.0 447.5 M685.2 450.3L688.0 447.5 M693.2 450.3L696.0 447.5 M701.2 450.3L704.0 447.5 M709.2 450.3L712.0 447.5 M717.2 450.3L720.0 447.5 M725.2 450.3L728.0 447.5 M733.2 450.3L736.0 447.5 M741.2 450.3L744.0 447.5 M749.2 450.3L752.0 447.5 M757.2 450.3L760.0 447.5 M765.2 450.3L768.0 447.5 M773.2 450.3L776.0 447.5 M781.2 450.3L784.0 447.5 M789.2 450.3L792.0 447.5 M797.2 450.3L800.0 447.5 M805.2 450.3L808.0 447.5 M813.2 450.3L816.0 447.5 M821.2 450.3L824.0 447.5 M829.2 450.3L832.0 447.5 M837.2 450.3L840.0 447.5 M845.2 450.3L848.0 447.5 M853.2 450.3L856.0 447.5 M861.2 450.3L864.0 447.5 M869.2 450.3L872.0 447.5 M877.2 450.3L880.0 447.5 M885.2 450.3L888.0 447.5 M893.2 450.3L896.0 447.5 M901.2 450.3L904.0 447.5 M909.2 450.3L912.0 447.5 M917.2 450.3L920.0 447.5 M925.2 450.3L928.0 447.5 M933.2 450.3L936.0 447.5 M941.2 450.3L944.0 447.5 M949.2 450.3L952.0 447.5 M957.2 450.3L960.0 447.5 M965.2 450.3L968.0 447.5 M973.2 450.3L976.0 447.5 M981.2 450.3L984.0 447.5 M989.2 450.3L992.0 447.5 M997.2 450.3L1000.0 447.5 M1005.2 450.3L1008.0 447.5 M1013.2 450.3L1016.0 447.5 M1021.2 450.3L1024.0 447.5 M1029.2 450.3L1032.0 447.5 M1037.2 450.3L1040.0 447.5" stroke="#151515" stroke-width="0.8" clip-path="url(#c10)"/>
<path d="M320 447.5L1040 447.5" stroke="#151515" stroke-width="1.2" />
<path d="M320 450.3L1040 450.3" stroke="#151515" stroke-width="1.2" />
<path d="M1040 382.4Q1054 383 1054 396V436Q1054 450 1040 450.3" stroke="#151515" stroke-width="1.2" fill="none" />
<path d="M298.5 366H272Q266.4 366 266.4 372V395.5" stroke="#151515" stroke-width="1.5" fill="none" />
<path d="M298.5 366V368.5L335 369.5" stroke="#151515" stroke-width="1.3" fill="none" />
<path d="M269.8 395.5V374Q269.8 369.8 274 369.8H298" stroke="#151515" stroke-width="1.2" fill="none" />
<path d="M298.6 466.3H272Q266.4 466.3 266.4 460.5V436.5" stroke="#151515" stroke-width="1.5" fill="none" />
<path d="M298.6 466.3V464.2L335 462" stroke="#151515" stroke-width="1.3" fill="none" />
<path d="M269.8 436.5V458Q269.8 462.6 274 462.6H298" stroke="#151515" stroke-width="1.2" fill="none" />
<path d="M267.2 376L269 377.2" stroke="#151515" stroke-width="1.1" />
<path d="M267.2 379L269 380.2" stroke="#151515" stroke-width="1.1" />
<path d="M267.2 382L269 383.2" stroke="#151515" stroke-width="1.1" />
<path d="M267.2 385L269 386.2" stroke="#151515" stroke-width="1.1" />
<path d="M267.2 388L269 389.2" stroke="#151515" stroke-width="1.1" />
<path d="M267.2 391L269 392.2" stroke="#151515" stroke-width="1.1" />
<path d="M267.2 439L269 440.2" stroke="#151515" stroke-width="1.1" />
<path d="M267.2 442L269 443.2" stroke="#151515" stroke-width="1.1" />
<path d="M267.2 445L269 446.2" stroke="#151515" stroke-width="1.1" />
<path d="M267.2 448L269 449.2" stroke="#151515" stroke-width="1.1" />
<path d="M267.2 451L269 452.2" stroke="#151515" stroke-width="1.1" />
<path d="M267.2 454L269 455.2" stroke="#151515" stroke-width="1.1" />
<path d="M267.2 457L269 458.2" stroke="#151515" stroke-width="1.1" />
<path d="M267.2 460L269 461.2" stroke="#151515" stroke-width="1.1" />
<path d="M273 366.8L274.6 369" stroke="#151515" stroke-width="1.0" />
<path d="M273 465.5L274.6 463.3" stroke="#151515" stroke-width="1.0" />
<path d="M276 366.8L277.6 369" stroke="#151515" stroke-width="1.0" />
<path d="M276 465.5L277.6 463.3" stroke="#151515" stroke-width="1.0" />
<path d="M279 366.8L280.6 369" stroke="#151515" stroke-width="1.0" />
<path d="M279 465.5L280.6 463.3" stroke="#151515" stroke-width="1.0" />
<path d="M282 366.8L283.6 369" stroke="#151515" stroke-width="1.0" />
<path d="M282 465.5L283.6 463.3" stroke="#151515" stroke-width="1.0" />
<path d="M285 366.8L286.6 369" stroke="#151515" stroke-width="1.0" />
<path d="M285 465.5L286.6 463.3" stroke="#151515" stroke-width="1.0" />
<path d="M288 366.8L289.6 369" stroke="#151515" stroke-width="1.0" />
<path d="M288 465.5L289.6 463.3" stroke="#151515" stroke-width="1.0" />
<path d="M291 366.8L292.6 369" stroke="#151515" stroke-width="1.0" />
<path d="M291 465.5L292.6 463.3" stroke="#151515" stroke-width="1.0" />
<path d="M294 366.8L295.6 369" stroke="#151515" stroke-width="1.0" />
<path d="M294 465.5L295.6 463.3" stroke="#151515" stroke-width="1.0" />
<path d="M297 366.8L298.6 369" stroke="#151515" stroke-width="1.0" />
<path d="M297 465.5L298.6 463.3" stroke="#151515" stroke-width="1.0" />
<path d="M272 372Q279 373 279 379Q279 383 274 385Q271 388 275 392Q278 395 282 395" stroke="#151515" stroke-width="1.2" fill="none" />
<path d="M272 460Q279 459 279 453Q279 449 274 447Q271 444 275 440Q278 437 282 437" stroke="#151515" stroke-width="1.2" fill="none" />
<clipPath id="c11"><rect x="280" y="375.3" width="4" height="15.300000000000011"/></clipPath>
<path d="M264.7 375.3L280.0 390.6 M267.3 375.3L282.6 390.6 M269.9 375.3L285.2 390.6 M272.5 375.3L287.8 390.6 M275.1 375.3L290.4 390.6 M277.7 375.3L293.0 390.6 M280.3 375.3L295.6 390.6 M282.9 375.3L298.2 390.6 M285.5 375.3L300.8 390.6 M288.1 375.3L303.4 390.6 M290.7 375.3L306.0 390.6 M293.3 375.3L308.6 390.6 M295.9 375.3L311.2 390.6 M298.5 375.3L313.8 390.6" stroke="#151515" stroke-width="0.9" clip-path="url(#c11)"/>
<path d="M280 375.3L284 375.3" stroke="#151515" stroke-width="1.2" />
<path d="M280 390.6L284 390.6" stroke="#151515" stroke-width="1.2" />
<path d="M280 375.3L280 390.6" stroke="#151515" stroke-width="1.2" />
<path d="M284 375.3L284 390.6" stroke="#151515" stroke-width="1.2" />
<clipPath id="c12"><rect x="281" y="442" width="4" height="16"/></clipPath>
<path d="M265.0 442L281.0 458 M267.6 442L283.6 458 M270.2 442L286.2 458 M272.8 442L288.8 458 M275.4 442L291.4 458 M278.0 442L294.0 458 M280.6 442L296.6 458 M283.2 442L299.2 458 M285.8 442L301.8 458 M288.4 442L304.4 458 M291.0 442L307.0 458 M293.6 442L309.6 458 M296.2 442L312.2 458 M298.8 442L314.8 458" stroke="#151515" stroke-width="0.9" clip-path="url(#c12)"/>
<path d="M281 442L285 442" stroke="#151515" stroke-width="1.2" />
<path d="M281 458L285 458" stroke="#151515" stroke-width="1.2" />
<path d="M281 442L281 458" stroke="#151515" stroke-width="1.2" />
<path d="M285 442L285 458" stroke="#151515" stroke-width="1.2" />
<clipPath id="c13"><path d="M283 376 L288.9 374.5 L294.8 377 L299 381.2 L305.8 380.4 L314.3 383 L324.4 386.3 L328.7 390.6 L327 392.3 L314.3 393.1 L305.8 389.7 L297.3 383.8 L290.6 383 L286 381Z"/></clipPath>
<path d="M264.4 374.5L283.0 393.1 M267.8 374.5L286.4 393.1 M271.2 374.5L289.8 393.1 M274.6 374.5L293.2 393.1 M278.0 374.5L296.6 393.1 M281.4 374.5L300.0 393.1 M284.8 374.5L303.4 393.1 M288.2 374.5L306.8 393.1 M291.6 374.5L310.2 393.1 M295.0 374.5L313.6 393.1 M298.4 374.5L317.0 393.1 M301.8 374.5L320.4 393.1 M305.2 374.5L323.8 393.1 M308.6 374.5L327.2 393.1 M312.0 374.5L330.6 393.1 M315.4 374.5L334.0 393.1 M318.8 374.5L337.4 393.1 M322.2 374.5L340.8 393.1 M325.6 374.5L344.2 393.1 M329.0 374.5L347.6 393.1 M332.4 374.5L351.0 393.1 M335.8 374.5L354.4 393.1 M339.2 374.5L357.8 393.1 M342.6 374.5L361.2 393.1 M346.0 374.5L364.6 393.1" stroke="#151515" stroke-width="1.1" clip-path="url(#c13)"/>
<path d="M283 376 L288.9 374.5 L294.8 377 L299 381.2 L305.8 380.4 L314.3 383 L324.4 386.3 L328.7 390.6 L327 392.3 L314.3 393.1 L305.8 389.7 L297.3 383.8 L290.6 383 L286 381Z" stroke="#151515" stroke-width="1.6" fill="none" />
<clipPath id="c14"><path d="M286.3 449.8 L305.8 440.5 L314.3 438 L327 440.5 L329.5 443 L327 446.4 L316 448 L314.3 454 L302.4 457.4 L290.6 459 L286.3 457.4Z"/></clipPath>
<path d="M265.3 438L286.3 459 M268.7 438L289.7 459 M272.1 438L293.1 459 M275.5 438L296.5 459 M278.9 438L299.9 459 M282.3 438L303.3 459 M285.7 438L306.7 459 M289.1 438L310.1 459 M292.5 438L313.5 459 M295.9 438L316.9 459 M299.3 438L320.3 459 M302.7 438L323.7 459 M306.1 438L327.1 459 M309.5 438L330.5 459 M312.9 438L333.9 459 M316.3 438L337.3 459 M319.7 438L340.7 459 M323.1 438L344.1 459 M326.5 438L347.5 459 M329.9 438L350.9 459 M333.3 438L354.3 459 M336.7 438L357.7 459 M340.1 438L361.1 459 M343.5 438L364.5 459 M346.9 438L367.9 459 M350.3 438L371.3 459" stroke="#151515" stroke-width="1.1" clip-path="url(#c14)"/>
<path d="M286.3 449.8 L305.8 440.5 L314.3 438 L327 440.5 L329.5 443 L327 446.4 L316 448 L314.3 454 L302.4 457.4 L290.6 459 L286.3 457.4Z" stroke="#151515" stroke-width="1.6" fill="none" />
<path d="M288 386Q292 390 290 394M300 389Q304 393 302 395" stroke="#151515" stroke-width="1.1" fill="none" />
<path d="M292 446Q296 442 300 444M296 440Q298 437 302 437" stroke="#151515" stroke-width="1.1" fill="none" />
<rect x="319.4" y="375.5" width="16.600000000000023" height="6.899999999999977" stroke="#151515" stroke-width="1.2" fill="none"/>
<rect x="319.4" y="450.3" width="16.600000000000023" height="6.699999999999989" stroke="#151515" stroke-width="1.2" fill="none"/>
<path d="M329.5 376V382M333 376V382M329.5 451V457M333 451V457" stroke="#151515" stroke-width="1.0" fill="none" />
<clipPath id="c15"><rect x="626" y="390.4" width="260" height="4.400000000000034"/></clipPath>
<path d="M621.6 394.8L626.0 390.4 M627.6 394.8L632.0 390.4 M633.6 394.8L638.0 390.4 M639.6 394.8L644.0 390.4 M645.6 394.8L650.0 390.4 M651.6 394.8L656.0 390.4 M657.6 394.8L662.0 390.4 M663.6 394.8L668.0 390.4 M669.6 394.8L674.0 390.4 M675.6 394.8L680.0 390.4 M681.6 394.8L686.0 390.4 M687.6 394.8L692.0 390.4 M693.6 394.8L698.0 390.4 M699.6 394.8L704.0 390.4 M705.6 394.8L710.0 390.4 M711.6 394.8L716.0 390.4 M717.6 394.8L722.0 390.4 M723.6 394.8L728.0 390.4 M729.6 394.8L734.0 390.4 M735.6 394.8L740.0 390.4 M741.6 394.8L746.0 390.4 M747.6 394.8L752.0 390.4 M753.6 394.8L758.0 390.4 M759.6 394.8L764.0 390.4 M765.6 394.8L770.0 390.4 M771.6 394.8L776.0 390.4 M777.6 394.8L782.0 390.4 M783.6 394.8L788.0 390.4 M789.6 394.8L794.0 390.4 M795.6 394.8L800.0 390.4 M801.6 394.8L806.0 390.4 M807.6 394.8L812.0 390.4 M813.6 394.8L818.0 390.4 M819.6 394.8L824.0 390.4 M825.6 394.8L830.0 390.4 M831.6 394.8L836.0 390.4 M837.6 394.8L842.0 390.4 M843.6 394.8L848.0 390.4 M849.6 394.8L854.0 390.4 M855.6 394.8L860.0 390.4 M861.6 394.8L866.0 390.4 M867.6 394.8L872.0 390.4 M873.6 394.8L878.0 390.4 M879.6 394.8L884.0 390.4 M885.6 394.8L890.0 390.4" stroke="#151515" stroke-width="0.9" clip-path="url(#c15)"/>
<path d="M626 390.4L886 390.4" stroke="#151515" stroke-width="1.2" />
<path d="M626 394.8L886 394.8" stroke="#151515" stroke-width="1.2" />
<clipPath id="c16"><rect x="626" y="436.5" width="260" height="4.5"/></clipPath>
<path d="M621.5 441L626.0 436.5 M627.5 441L632.0 436.5 M633.5 441L638.0 436.5 M639.5 441L644.0 436.5 M645.5 441L650.0 436.5 M651.5 441L656.0 436.5 M657.5 441L662.0 436.5 M663.5 441L668.0 436.5 M669.5 441L674.0 436.5 M675.5 441L680.0 436.5 M681.5 441L686.0 436.5 M687.5 441L692.0 436.5 M693.5 441L698.0 436.5 M699.5 441L704.0 436.5 M705.5 441L710.0 436.5 M711.5 441L716.0 436.5 M717.5 441L722.0 436.5 M723.5 441L728.0 436.5 M729.5 441L734.0 436.5 M735.5 441L740.0 436.5 M741.5 441L746.0 436.5 M747.5 441L752.0 436.5 M753.5 441L758.0 436.5 M759.5 441L764.0 436.5 M765.5 441L770.0 436.5 M771.5 441L776.0 436.5 M777.5 441L782.0 436.5 M783.5 441L788.0 436.5 M789.5 441L794.0 436.5 M795.5 441L800.0 436.5 M801.5 441L806.0 436.5 M807.5 441L812.0 436.5 M813.5 441L818.0 436.5 M819.5 441L824.0 436.5 M825.5 441L830.0 436.5 M831.5 441L836.0 436.5 M837.5 441L842.0 436.5 M843.5 441L848.0 436.5 M849.5 441L854.0 436.5 M855.5 441L860.0 436.5 M861.5 441L866.0 436.5 M867.5 441L872.0 436.5 M873.5 441L878.0 436.5 M879.5 441L884.0 436.5 M885.5 441L890.0 436.5" stroke="#151515" stroke-width="0.9" clip-path="url(#c16)"/>
<path d="M626 436.5L886 436.5" stroke="#151515" stroke-width="1.2" />
<path d="M626 441L886 441" stroke="#151515" stroke-width="1.2" />
<path d="M626 390.4L626 394.8" stroke="#151515" stroke-width="1.2" />
<path d="M626 436.5L626 441" stroke="#151515" stroke-width="1.2" />
<path d="M886 394.8L886 388.5Q889 387 891 390L888 394.8M886 436.5L886 443Q889 444 891 441L888 436.5" stroke="#151515" stroke-width="1.2" fill="none" />
<path d="M889 391L897 395.6M889 440L897 436.2" stroke="#151515" stroke-width="1.0" fill="none" />
<path d="M574 370V291.5" stroke="#151515" stroke-width="1.5" fill="none" />
<path d="M574 291.5H583Q595 292 596 304L597.5 319Q599 325 606 329L657 357.5Q663 361 666 366L685.5 367.5V370" stroke="#151515" stroke-width="1.5" fill="none" />
<path d="M575 295.5H583Q592 296.5 592.5 305L593.5 322Q595 330 603 333.5L655 361Q659 364 662 368.5" stroke="#151515" stroke-width="1.2" fill="none" />
<path d="M594 330V370" stroke="#151515" stroke-width="1.3" fill="none" />
<path d="M598.5 334V370" stroke="#151515" stroke-width="1.2" fill="none" stroke-dasharray="3.5 2.5"/>
<path d="M603 333.5L660 369" stroke="#151515" stroke-width="1.3" fill="none" />
<clipPath id="c17"><path d="M574 291.5 L583 291.5 L596 304 L597.5 319 L606 329 L657 357.5 L666 366 L685.5 367.5 L685.5 370 L662 368.5 L655 361 L603 333.5 L593.5 322 L592.5 305 L583 295.5 L575 295.5Z"/></clipPath>
<path d="M495.5 370L574.0 291.5 M499.5 370L578.0 291.5 M503.5 370L582.0 291.5 M507.5 370L586.0 291.5 M511.5 370L590.0 291.5 M515.5 370L594.0 291.5 M519.5 370L598.0 291.5 M523.5 370L602.0 291.5 M527.5 370L606.0 291.5 M531.5 370L610.0 291.5 M535.5 370L614.0 291.5 M539.5 370L618.0 291.5 M543.5 370L622.0 291.5 M547.5 370L626.0 291.5 M551.5 370L630.0 291.5 M555.5 370L634.0 291.5 M559.5 370L638.0 291.5 M563.5 370L642.0 291.5 M567.5 370L646.0 291.5 M571.5 370L650.0 291.5 M575.5 370L654.0 291.5 M579.5 370L658.0 291.5 M583.5 370L662.0 291.5 M587.5 370L666.0 291.5 M591.5 370L670.0 291.5 M595.5 370L674.0 291.5 M599.5 370L678.0 291.5 M603.5 370L682.0 291.5 M607.5 370L686.0 291.5 M611.5 370L690.0 291.5 M615.5 370L694.0 291.5 M619.5 370L698.0 291.5 M623.5 370L702.0 291.5 M627.5 370L706.0 291.5 M631.5 370L710.0 291.5 M635.5 370L714.0 291.5 M639.5 370L718.0 291.5 M643.5 370L722.0 291.5 M647.5 370L726.0 291.5 M651.5 370L730.0 291.5 M655.5 370L734.0 291.5 M659.5 370L738.0 291.5 M663.5 370L742.0 291.5 M667.5 370L746.0 291.5 M671.5 370L750.0 291.5 M675.5 370L754.0 291.5 M679.5 370L758.0 291.5 M683.5 370L762.0 291.5 M687.5 370L766.0 291.5 M691.5 370L770.0 291.5 M695.5 370L774.0 291.5 M699.5 370L778.0 291.5 M703.5 370L782.0 291.5 M707.5 370L786.0 291.5 M711.5 370L790.0 291.5 M715.5 370L794.0 291.5 M719.5 370L798.0 291.5 M723.5 370L802.0 291.5 M727.5 370L806.0 291.5 M731.5 370L810.0 291.5 M735.5 370L814.0 291.5 M739.5 370L818.0 291.5 M743.5 370L822.0 291.5 M747.5 370L826.0 291.5 M751.5 370L830.0 291.5 M755.5 370L834.0 291.5 M759.5 370L838.0 291.5 M763.5 370L842.0 291.5" stroke="#151515" stroke-width="0.9" clip-path="url(#c17)"/>
<path d="M578 462V482Q578.5 490 572 494Q565.5 499 565.5 507V537H576Q589 536 589 523V508Q589 505 593.7 504.2L662.8 464.4H684V462" stroke="#151515" stroke-width="1.5" fill="none" />
<path d="M569 536H576Q585.5 535 585.5 523V507Q585.5 501 591 499L659 462" stroke="#151515" stroke-width="1.2" fill="none" />
<path d="M598.3 462V484Q598 492 592 497Q587 502 586.6 504.2" stroke="#151515" stroke-width="1.3" fill="none" />
<path d="M602 462V485.5" stroke="#151515" stroke-width="1.2" fill="none" stroke-dasharray="3.5 2.5"/>
<clipPath id="c18"><path d="M565.5 537 L576 537 L589 523 L589 508 L593.7 504.2 L662.8 464.4 L684 464.4 L684 462 L659 462 L591 499 L585.5 507 L585.5 523 L576 536 L569 536Z"/></clipPath>
<path d="M490.5 537L565.5 462 M494.5 537L569.5 462 M498.5 537L573.5 462 M502.5 537L577.5 462 M506.5 537L581.5 462 M510.5 537L585.5 462 M514.5 537L589.5 462 M518.5 537L593.5 462 M522.5 537L597.5 462 M526.5 537L601.5 462 M530.5 537L605.5 462 M534.5 537L609.5 462 M538.5 537L613.5 462 M542.5 537L617.5 462 M546.5 537L621.5 462 M550.5 537L625.5 462 M554.5 537L629.5 462 M558.5 537L633.5 462 M562.5 537L637.5 462 M566.5 537L641.5 462 M570.5 537L645.5 462 M574.5 537L649.5 462 M578.5 537L653.5 462 M582.5 537L657.5 462 M586.5 537L661.5 462 M590.5 537L665.5 462 M594.5 537L669.5 462 M598.5 537L673.5 462 M602.5 537L677.5 462 M606.5 537L681.5 462 M610.5 537L685.5 462 M614.5 537L689.5 462 M618.5 537L693.5 462 M622.5 537L697.5 462 M626.5 537L701.5 462 M630.5 537L705.5 462 M634.5 537L709.5 462 M638.5 537L713.5 462 M642.5 537L717.5 462 M646.5 537L721.5 462 M650.5 537L725.5 462 M654.5 537L729.5 462 M658.5 537L733.5 462 M662.5 537L737.5 462 M666.5 537L741.5 462 M670.5 537L745.5 462 M674.5 537L749.5 462 M678.5 537L753.5 462 M682.5 537L757.5 462 M686.5 537L761.5 462 M690.5 537L765.5 462 M694.5 537L769.5 462 M698.5 537L773.5 462 M702.5 537L777.5 462 M706.5 537L781.5 462 M710.5 537L785.5 462 M714.5 537L789.5 462 M718.5 537L793.5 462 M722.5 537L797.5 462 M726.5 537L801.5 462 M730.5 537L805.5 462 M734.5 537L809.5 462 M738.5 537L813.5 462 M742.5 537L817.5 462 M746.5 537L821.5 462 M750.5 537L825.5 462 M754.5 537L829.5 462 M758.5 537L833.5 462" stroke="#151515" stroke-width="0.9" clip-path="url(#c18)"/>
<path d="M958.2 387V443.8M964.6 387V443.8M958.2 387H964.6M958.2 443.8H964.6" stroke="#151515" stroke-width="1.3" fill="none" />
<path d="M959.5 389L963.3 392" stroke="#151515" stroke-width="0.9" />
<path d="M959.5 394L963.3 397" stroke="#151515" stroke-width="0.9" />
<path d="M959.5 399L963.3 402" stroke="#151515" stroke-width="0.9" />
<path d="M959.5 404L963.3 407" stroke="#151515" stroke-width="0.9" />
<path d="M959.5 409L963.3 412" stroke="#151515" stroke-width="0.9" />
<path d="M959.5 414L963.3 417" stroke="#151515" stroke-width="0.9" />
<path d="M959.5 419L963.3 422" stroke="#151515" stroke-width="0.9" />
<path d="M959.5 424L963.3 427" stroke="#151515" stroke-width="0.9" />
<path d="M959.5 429L963.3 432" stroke="#151515" stroke-width="0.9" />
<path d="M959.5 434L963.3 437" stroke="#151515" stroke-width="0.9" />
<path d="M959.5 439L963.3 442" stroke="#151515" stroke-width="0.9" />
<clipPath id="c19"><path d="M965 386 L982 386 L982 405 L965 405Z"/></clipPath>
<path d="M946.0 405L965.0 386 M950.2 405L969.2 386 M954.4 405L973.4 386 M958.6 405L977.6 386 M962.8 405L981.8 386 M967.0 405L986.0 386 M971.2 405L990.2 386 M975.4 405L994.4 386 M979.6 405L998.6 386 M983.8 405L1002.8 386 M988.0 405L1007.0 386 M992.2 405L1011.2 386 M996.4 405L1015.4 386 M1000.6 405L1019.6 386" stroke="#151515" stroke-width="1.0" clip-path="url(#c19)"/>
<path d="M965 386 L982 386 L982 405 L965 405Z" stroke="#151515" stroke-width="1.6" fill="none" />
<clipPath id="c20"><path d="M965 427 L982 427 L982 446 L965 446Z"/></clipPath>
<path d="M946.0 446L965.0 427 M950.2 446L969.2 427 M954.4 446L973.4 427 M958.6 446L977.6 427 M962.8 446L981.8 427 M967.0 446L986.0 427 M971.2 446L990.2 427 M975.4 446L994.4 427 M979.6 446L998.6 427 M983.8 446L1002.8 427 M988.0 446L1007.0 427 M992.2 446L1011.2 427 M996.4 446L1015.4 427 M1000.6 446L1019.6 427" stroke="#151515" stroke-width="1.0" clip-path="url(#c20)"/>
<path d="M965 427 L982 427 L982 446 L965 446Z" stroke="#151515" stroke-width="1.6" fill="none" />
<rect x="969" y="391.5" width="11" height="2.5" stroke="#151515" stroke-width="1.0" fill="#fff"/>
<rect x="969" y="438" width="11" height="2.5" stroke="#151515" stroke-width="1.0" fill="#fff"/>
<rect x="959.3" y="407.5" width="59.700000000000045" height="16.399999999999977" stroke="#151515" stroke-width="1.4" fill="none"/>
<path d="M987.4 407.5L987.4 423.9" stroke="#151515" stroke-width="1.2" />
<path d="M1019 409L1022 411" stroke="#151515" stroke-width="1.0" />
<path d="M1019 422.5L1022 420.5" stroke="#151515" stroke-width="1.0" />
<clipPath id="c21"><rect x="984" y="387.6" width="17" height="4.699999999999989"/></clipPath>
<path d="M979.3 392.3L984.0 387.6 M982.5 392.3L987.2 387.6 M985.7 392.3L990.4 387.6 M988.9 392.3L993.6 387.6 M992.1 392.3L996.8 387.6 M995.3 392.3L1000.0 387.6 M998.5 392.3L1003.2 387.6 M1001.7 392.3L1006.4 387.6 M1004.9 392.3L1009.6 387.6" stroke="#151515" stroke-width="0.9" clip-path="url(#c21)"/>
<path d="M984 387.6L1001 387.6" stroke="#151515" stroke-width="1.2" />
<path d="M984 392.3L1001 392.3" stroke="#151515" stroke-width="1.2" />
<clipPath id="c22"><rect x="984" y="439.6" width="17" height="4.699999999999989"/></clipPath>
<path d="M979.3 444.3L984.0 439.6 M982.5 444.3L987.2 439.6 M985.7 444.3L990.4 439.6 M988.9 444.3L993.6 439.6 M992.1 444.3L996.8 439.6 M995.3 444.3L1000.0 439.6 M998.5 444.3L1003.2 439.6 M1001.7 444.3L1006.4 439.6 M1004.9 444.3L1009.6 439.6" stroke="#151515" stroke-width="0.9" clip-path="url(#c22)"/>
<path d="M984 439.6L1001 439.6" stroke="#151515" stroke-width="1.2" />
<path d="M984 444.3L1001 444.3" stroke="#151515" stroke-width="1.2" />
<path d="M984 387.6L984 392.3" stroke="#151515" stroke-width="1.2" />
<path d="M1001 387.6L1001 392.3" stroke="#151515" stroke-width="1.2" />
<path d="M984 439.6L984 444.3" stroke="#151515" stroke-width="1.2" />
<path d="M1001 439.6L1001 444.3" stroke="#151515" stroke-width="1.2" />
<clipPath id="c23"><rect x="984" y="402" width="19" height="5.5"/></clipPath>
<path d="M978.5 407.5L984.0 402 M981.7 407.5L987.2 402 M984.9 407.5L990.4 402 M988.1 407.5L993.6 402 M991.3 407.5L996.8 402 M994.5 407.5L1000.0 402 M997.7 407.5L1003.2 402 M1000.9 407.5L1006.4 402 M1004.1 407.5L1009.6 402 M1007.3 407.5L1012.8 402" stroke="#151515" stroke-width="0.9" clip-path="url(#c23)"/>
<path d="M984 402L1003 402" stroke="#151515" stroke-width="1.2" />
<path d="M984 407.5L1003 407.5" stroke="#151515" stroke-width="1.2" />
<clipPath id="c24"><rect x="984" y="424" width="19" height="5.5"/></clipPath>
<path d="M978.5 429.5L984.0 424 M981.7 429.5L987.2 424 M984.9 429.5L990.4 424 M988.1 429.5L993.6 424 M991.3 429.5L996.8 424 M994.5 429.5L1000.0 424 M997.7 429.5L1003.2 424 M1000.9 429.5L1006.4 424 M1004.1 429.5L1009.6 424 M1007.3 429.5L1012.8 424" stroke="#151515" stroke-width="0.9" clip-path="url(#c24)"/>
<path d="M984 424L1003 424" stroke="#151515" stroke-width="1.2" />
<path d="M984 429.5L1003 429.5" stroke="#151515" stroke-width="1.2" />
<circle cx="989" cy="397.5" r="2.3" stroke="#151515" stroke-width="1.2" fill="none"/>
<circle cx="989" cy="434.5" r="2.3" stroke="#151515" stroke-width="1.2" fill="none"/>
<circle cx="1000" cy="397.5" r="2.3" stroke="#151515" stroke-width="1.2" fill="none"/>
<circle cx="1000" cy="434.5" r="2.3" stroke="#151515" stroke-width="1.2" fill="none"/>
<clipPath id="c25"><path d="M1008 394 L1017.3 394 L1017.3 407.5 L1008 407.5Z"/></clipPath>
<path d="M994.5 407.5L1008.0 394 M997.7 407.5L1011.2 394 M1000.9 407.5L1014.4 394 M1004.1 407.5L1017.6 394 M1007.3 407.5L1020.8 394 M1010.5 407.5L1024.0 394 M1013.7 407.5L1027.2 394 M1016.9 407.5L1030.4 394 M1020.1 407.5L1033.6 394 M1023.3 407.5L1036.8 394 M1026.5 407.5L1040.0 394 M1029.7 407.5L1043.2 394" stroke="#151515" stroke-width="0.9" clip-path="url(#c25)"/>
<path d="M1008 394 L1017.3 394 L1017.3 407.5 L1008 407.5Z" stroke="#151515" stroke-width="1.6" fill="none" />
<clipPath id="c26"><path d="M1008 424 L1017.3 424 L1017.3 437.5 L1008 437.5Z"/></clipPath>
<path d="M994.5 437.5L1008.0 424 M997.7 437.5L1011.2 424 M1000.9 437.5L1014.4 424 M1004.1 437.5L1017.6 424 M1007.3 437.5L1020.8 424 M1010.5 437.5L1024.0 424 M1013.7 437.5L1027.2 424 M1016.9 437.5L1030.4 424 M1020.1 437.5L1033.6 424 M1023.3 437.5L1036.8 424 M1026.5 437.5L1040.0 424 M1029.7 437.5L1043.2 424" stroke="#151515" stroke-width="0.9" clip-path="url(#c26)"/>
<path d="M1008 424 L1017.3 424 L1017.3 437.5 L1008 437.5Z" stroke="#151515" stroke-width="1.6" fill="none" />
<circle cx="1012.5" cy="392" r="2" stroke="#151515" stroke-width="1.1" fill="none"/>
<circle cx="1012.5" cy="440" r="2" stroke="#151515" stroke-width="1.1" fill="none"/>
<rect x="1024.3" y="405" width="4.7000000000000455" height="21.19999999999999" stroke="#151515" stroke-width="1.2" fill="none"/>
<path d="M1029 390V405M1029 426.2V441" stroke="#151515" stroke-width="1.2" fill="none" />
<clipPath id="c27"><path d="M1032.5 381.7 L1045.4 381.7 L1045.4 452 L1032.5 452Z"/></clipPath>
<path d="M962.2 381.7L1032.5 452 M966.4 381.7L1036.7 452 M970.6 381.7L1040.9 452 M974.8 381.7L1045.1 452 M979.0 381.7L1049.3 452 M983.2 381.7L1053.5 452 M987.4 381.7L1057.7 452 M991.6 381.7L1061.9 452 M995.8 381.7L1066.1 452 M1000.0 381.7L1070.3 452 M1004.2 381.7L1074.5 452 M1008.4 381.7L1078.7 452 M1012.6 381.7L1082.9 452 M1016.8 381.7L1087.1 452 M1021.0 381.7L1091.3 452 M1025.2 381.7L1095.5 452 M1029.4 381.7L1099.7 452 M1033.6 381.7L1103.9 452 M1037.8 381.7L1108.1 452 M1042.0 381.7L1112.3 452 M1046.2 381.7L1116.5 452 M1050.4 381.7L1120.7 452 M1054.6 381.7L1124.9 452 M1058.8 381.7L1129.1 452 M1063.0 381.7L1133.3 452 M1067.2 381.7L1137.5 452 M1071.4 381.7L1141.7 452 M1075.6 381.7L1145.9 452 M1079.8 381.7L1150.1 452 M1084.0 381.7L1154.3 452 M1088.2 381.7L1158.5 452 M1092.4 381.7L1162.7 452 M1096.6 381.7L1166.9 452 M1100.8 381.7L1171.1 452 M1105.0 381.7L1175.3 452 M1109.2 381.7L1179.5 452 M1113.4 381.7L1183.7 452" stroke="#151515" stroke-width="1.0" clip-path="url(#c27)"/>
<path d="M1032.5 381.7 L1045.4 381.7 L1045.4 452 L1032.5 452Z" stroke="#151515" stroke-width="1.6" fill="none" />
<clipPath id="c28"><path d="M1024.3 410 L1052 410 L1052 422 L1024.3 422Z"/></clipPath>
<path d="M1012.3 410L1024.3 422 M1015.8 410L1027.8 422 M1019.3 410L1031.3 422 M1022.8 410L1034.8 422 M1026.3 410L1038.3 422 M1029.8 410L1041.8 422 M1033.3 410L1045.3 422 M1036.8 410L1048.8 422 M1040.3 410L1052.3 422 M1043.8 410L1055.8 422 M1047.3 410L1059.3 422 M1050.8 410L1062.8 422 M1054.3 410L1066.3 422 M1057.8 410L1069.8 422 M1061.3 410L1073.3 422" stroke="#151515" stroke-width="1.0" clip-path="url(#c28)"/>
<path d="M1024.3 410 L1052 410 L1052 422 L1024.3 422Z" stroke="#151515" stroke-width="1.6" fill="none" />
<path d="M1045.4 386H1053V398H1049V408M1045.4 446H1053V434H1049V424" stroke="#151515" stroke-width="1.2" fill="none" />
<path d="M1029 384H1032.5M1029 448H1032.5" stroke="#151515" stroke-width="1.1" fill="none" />
<clipPath id="c29"><path d="M1045 376 L1052 376 L1060 380 L1066 388 L1069 400 L1069 432 L1066 444 L1060 452 L1052 456 L1045 456 L1053 450 L1057.5 440 L1058.3 432 L1058.3 400 L1057.5 392 L1053 382Z"/></clipPath>
<path d="M965.0 376L1045.0 456 M970.0 376L1050.0 456 M975.0 376L1055.0 456 M980.0 376L1060.0 456 M985.0 376L1065.0 456 M990.0 376L1070.0 456 M995.0 376L1075.0 456 M1000.0 376L1080.0 456 M1005.0 376L1085.0 456 M1010.0 376L1090.0 456 M1015.0 376L1095.0 456 M1020.0 376L1100.0 456 M1025.0 376L1105.0 456 M1030.0 376L1110.0 456 M1035.0 376L1115.0 456 M1040.0 376L1120.0 456 M1045.0 376L1125.0 456 M1050.0 376L1130.0 456 M1055.0 376L1135.0 456 M1060.0 376L1140.0 456 M1065.0 376L1145.0 456 M1070.0 376L1150.0 456 M1075.0 376L1155.0 456 M1080.0 376L1160.0 456 M1085.0 376L1165.0 456 M1090.0 376L1170.0 456 M1095.0 376L1175.0 456 M1100.0 376L1180.0 456 M1105.0 376L1185.0 456 M1110.0 376L1190.0 456 M1115.0 376L1195.0 456 M1120.0 376L1200.0 456 M1125.0 376L1205.0 456 M1130.0 376L1210.0 456 M1135.0 376L1215.0 456 M1140.0 376L1220.0 456 M1145.0 376L1225.0 456" stroke="#151515" stroke-width="1.0" clip-path="url(#c29)"/>
<path d="M1045 376 L1052 376 L1060 380 L1066 388 L1069 400 L1069 432 L1066 444 L1060 452 L1052 456 L1045 456 L1053 450 L1057.5 440 L1058.3 432 L1058.3 400 L1057.5 392 L1053 382Z" stroke="#151515" stroke-width="1.6" fill="none" />
<path d="M912.5 461V530.4L1050 519Q1070 514 1076.5 495.6L1069 458" stroke="#151515" stroke-width="1.4" fill="none" />
<path d="M930.6 466.5L930.6 528.3" stroke="#151515" stroke-width="1.3" />
<path d="M919.5 468V528" stroke="#151515" stroke-width="1.1" fill="none" stroke-dasharray="5 3"/>
<circle cx="948.4" cy="502.6" r="10.4" stroke="#151515" stroke-width="1.5" fill="none"/>
<path d="M935.0 502.6L961.8 502.6" stroke="#151515" stroke-width="0.9" />
<path d="M948.4 489.20000000000005L948.4 516.0" stroke="#151515" stroke-width="0.9" />
<circle cx="985.1" cy="501.2" r="6.7" stroke="#151515" stroke-width="1.5" fill="none"/>
<path d="M975.4 501.2L994.8000000000001 501.2" stroke="#151515" stroke-width="0.9" />
<path d="M985.1 491.5L985.1 510.9" stroke="#151515" stroke-width="0.9" />
<circle cx="1013.8" cy="500.7" r="6.7" stroke="#151515" stroke-width="1.5" fill="none"/>
<path d="M1004.0999999999999 500.7L1023.5 500.7" stroke="#151515" stroke-width="0.9" />
<path d="M1013.8 491.0L1013.8 510.4" stroke="#151515" stroke-width="0.9" />
<circle cx="1054.1" cy="499.1" r="10.5" stroke="#151515" stroke-width="1.5" fill="none"/>
<path d="M1040.6 499.1L1067.6 499.1" stroke="#151515" stroke-width="0.9" />
<path d="M1054.1 485.6L1054.1 512.6" stroke="#151515" stroke-width="0.9" />
<path d="M152 289L128.6 404" stroke="#151515" stroke-width="1.5" />
<text x="0" y="0" transform="translate(156.8 284.5) rotate(-90)" font-family="Liberation Serif" font-size="14" text-anchor="start" fill="#151515">1</text>
<path d="M259 289L279 367" stroke="#151515" stroke-width="1.5" />
<text x="0" y="0" transform="translate(263.8 284.5) rotate(-90)" font-family="Liberation Serif" font-size="14" text-anchor="start" fill="#151515">2</text>
<path d="M287.5 289L309 372" stroke="#151515" stroke-width="1.5" />
<text x="0" y="0" transform="translate(292.8 284.5) rotate(-90)" font-family="Liberation Serif" font-size="14" text-anchor="start" fill="#151515">3</text>
<path d="M344 289L366.5 372" stroke="#151515" stroke-width="1.5" />
<text x="0" y="0" transform="translate(348.8 284.5) rotate(-90)" font-family="Liberation Serif" font-size="14" text-anchor="start" fill="#151515">4</text>
<path d="M380 289L402.5 379" stroke="#151515" stroke-width="1.5" />
<text x="0" y="0" transform="translate(384.8 284.5) rotate(-90)" font-family="Liberation Serif" font-size="14" text-anchor="start" fill="#151515">5</text>
<path d="M421 289L447.6 396.5" stroke="#151515" stroke-width="1.5" />
<text x="0" y="0" transform="translate(425.8 284.5) rotate(-90)" font-family="Liberation Serif" font-size="14" text-anchor="start" fill="#151515">6</text>
<path d="M643.8 289.5L635 345" stroke="#151515" stroke-width="1.5" />
<text x="0" y="0" transform="translate(647.8 284.5) rotate(-90)" font-family="Liberation Serif" font-size="14" text-anchor="start" fill="#151515">7</text>
<path d="M696.4 289L718 388.5" stroke="#151515" stroke-width="1.5" />
<text x="0" y="0" transform="translate(701.1999999999999 284.5) rotate(-90)" font-family="Liberation Serif" font-size="14" text-anchor="start" fill="#151515">8</text>
<path d="M904.6 288.3L965.7 387.6" stroke="#151515" stroke-width="1.5" />
<text x="0" y="0" transform="translate(907.5999999999999 284.5) rotate(-90)" font-family="Liberation Serif" font-size="14" text-anchor="start" fill="#151515">9</text>
<path d="M941 288L979 387" stroke="#151515" stroke-width="1.5" />
<text x="0" y="0" transform="translate(945.8 284.5) rotate(-90)" font-family="Liberation Serif" font-size="14" text-anchor="start" fill="#151515">10</text>
<path d="M990.3 288L986.6 386" stroke="#151515" stroke-width="1.5" />
<text x="0" y="0" transform="translate(995.0999999999999 284.5) rotate(-90)" font-family="Liberation Serif" font-size="14" text-anchor="start" fill="#151515">11</text>
<path d="M1014 288L998.5 386" stroke="#151515" stroke-width="1.5" />
<text x="0" y="0" transform="translate(1019.8 284.5) rotate(-90)" font-family="Liberation Serif" font-size="14" text-anchor="start" fill="#151515">12</text>
<path d="M1045 288L1015.8 395" stroke="#151515" stroke-width="1.5" />
<text x="0" y="0" transform="translate(1050.7 284.5) rotate(-90)" font-family="Liberation Serif" font-size="14" text-anchor="start" fill="#151515">13</text>
<path d="M1067 288L1045 385" stroke="#151515" stroke-width="1.5" />
<text x="0" y="0" transform="translate(1072.5 284.5) rotate(-90)" font-family="Liberation Serif" font-size="14" text-anchor="start" fill="#151515">14</text></svg><style>.rc{position:absolute;transform-origin:0 0;transform:rotate(-90deg);white-space:nowrap;display:flex;justify-content:space-between;font-family:"Liberation Serif",serif;font-weight:500;overflow:visible}.rc i{font-style:normal;display:block;flex:none;text-align:center;overflow:visible;white-space:nowrap}.rc i.pl{text-align:left}.rc i.asc{font-family:"Liberation Mono",monospace;letter-spacing:-1.4px;text-align:center}.rc i.dg{font-family:"Liberation Mono",monospace;font-size:20px;letter-spacing:-0.8px;font-weight:400;transform:scaleX(0.84)}.rc i.dg2{font-family:"Liberation Mono",monospace;font-size:16px;letter-spacing:-1.9px;font-weight:400;transform:scaleX(0.9)}</style><div class="rc" style="left:1061px;top:397px;width:62px;font-size:15px;height:15px;line-height:15px;color:#111;"><i style="width:15.00px">图</i><i style="width:7.50px">&nbsp;</i><i class="dg2" style="width:37.50px">13-94</i></div>
<div class="rc" style="left:1061px;top:315px;width:197px;font-size:15px;height:15px;line-height:15px;color:#111;"><i style="width:15.00px">双</i><i style="width:15.00px">筒</i><i style="width:15.00px">充</i><i style="width:15.00px">气</i><i style="width:15.00px">式</i><i style="width:15.00px">减</i><i style="width:15.00px">振</i><i style="width:15.00px">器</i><i style="width:15.00px">结</i><i style="width:15.00px">构</i><i style="width:15.00px">图</i></div>
<div class="rc" style="left:1086px;top:531px;width:529px;font-size:14px;height:14px;line-height:14px;color:#111;"><i class="asc" style="width:7.00px">1</i><i style="width:14.00px">—</i><i style="width:14.00px">六</i><i style="width:14.00px">方</i><i class="asc" style="width:14.00px">;2</i><i style="width:14.00px">—</i><i style="width:14.00px">盖</i><i style="width:14.00px">板</i><i class="asc" style="width:14.00px">;3</i><i style="width:14.00px">—</i><i style="width:14.00px">导</i><i style="width:14.00px">向</i><i style="width:14.00px">座</i><i class="asc" style="width:14.00px">;4</i><i style="width:14.00px">—</i><i style="width:14.00px">贮</i><i style="width:14.00px">油</i><i style="width:14.00px">缸</i><i style="width:14.00px">筒</i><i class="asc" style="width:14.00px">;5</i><i style="width:14.00px">—</i><i style="width:14.00px">补</i><i style="width:14.00px">偿</i><i style="width:14.00px">腔</i><i class="asc" style="width:14.00px">;6</i><i style="width:14.00px">—</i><i style="width:14.00px">活</i><i style="width:14.00px">塞</i><i style="width:14.00px">杆</i><i class="asc" style="width:14.00px">;7</i><i style="width:14.00px">—</i><i style="width:14.00px">弹</i><i style="width:14.00px">簧</i></div>
<div class="rc" style="left:1109px;top:531px;width:528px;font-size:14px;height:14px;line-height:14px;color:#111;"><i style="width:14.00px">架</i><i class="asc" style="width:14.00px">;8</i><i style="width:14.00px">—</i><i style="width:14.00px">限</i><i style="width:14.00px">位</i><i style="width:14.00px">块</i><i class="asc" style="width:14.00px">;9</i><i style="width:14.00px">—</i><i style="width:14.00px">压</i><i style="width:14.00px">缩</i><i style="width:14.00px">阀</i><i class="asc" style="width:21.00px">;10</i><i style="width:14.00px">—</i><i style="width:14.00px">密</i><i style="width:14.00px">封</i><i style="width:14.00px">环</i><i class="asc" style="width:21.00px">;11</i><i style="width:14.00px">—</i><i style="width:14.00px">阀</i><i style="width:14.00px">片</i><i class="asc" style="width:21.00px">;12</i><i style="width:14.00px">—</i><i style="width:14.00px">活</i><i style="width:14.00px">塞</i><i style="width:14.00px">紧</i><i style="width:14.00px">固</i><i style="width:14.00px">螺</i><i style="width:14.00px">母</i><i class="asc" style="width:21.00px">;13</i><i style="width:14.00px">—</i><i style="width:14.00px">活</i></div>
<div class="rc" style="left:1135px;top:531px;width:129px;font-size:14px;height:14px;line-height:14px;color:#111;"><i style="width:14.00px">杆</i><i style="width:14.00px">小</i><i style="width:14.00px">端</i><i class="asc" style="width:21.00px">;14</i><i style="width:14.00px">—</i><i style="width:14.00px">底</i><i style="width:14.00px">阀</i></div>
<div class="rc" style="left:1169px;top:550px;width:559px;font-size:18px;height:18px;line-height:18px;color:#111;"><i style="width:18.00px">等</i><i style="width:18.00px">出</i><i style="width:18.00px">现</i><i style="width:18.00px">了</i><i style="width:18.00px">电</i><i style="width:18.00px">控</i><i style="width:18.00px">阻</i><i style="width:18.00px">尼</i><i style="width:18.00px">力</i><i style="width:18.00px">可</i><i style="width:18.00px">调</i><i style="width:18.00px">减</i><i style="width:18.00px">振</i><i class="pl" style="width:27.00px">器<b style="position:relative;left:-5.4px;font-weight:inherit">，</b></i><i style="width:18.00px">图</i><i style="width:3.60px">&nbsp;</i><i class="dg" style="width:46.80px">13-95</i><i style="width:3.60px">&nbsp;</i><i style="width:18.00px">为</i><i style="width:18.00px">其</i><i style="width:18.00px">结</i><i style="width:18.00px">构</i><i style="width:18.00px">图</i><i style="width:18.00px">及</i><i style="width:18.00px">阻</i><i style="width:18.00px">尼</i></div>
<div class="rc" style="left:1200px;top:540px;width:556px;font-size:18px;height:18px;line-height:18px;color:#111;"><i style="width:18.00px">过</i><i style="width:18.00px">电</i><i style="width:18.00px">磁</i><i style="width:18.00px">阀</i><i style="width:18.00px">控</i><i style="width:18.00px">制</i><i style="width:18.00px">相</i><i style="width:18.00px">关</i><i style="width:18.00px">阀</i><i style="width:18.00px">系</i><i style="width:18.00px">的</i><i style="width:18.00px">开</i><i style="width:18.00px">启</i><i style="width:18.00px">与</i><i style="width:18.00px">关</i><i class="pl" style="width:27.00px">闭<b style="position:relative;left:-5.4px;font-weight:inherit">，</b></i><i style="width:18.00px">从</i><i style="width:18.00px">而</i><i style="width:18.00px">改</i><i style="width:18.00px">变</i><i style="width:18.00px">减</i><i style="width:18.00px">振</i><i style="width:18.00px">器</i><i style="width:18.00px">阻</i><i style="width:18.00px">尼</i><i style="width:18.00px">力</i></div><!--DOCEND--></div>
  <div class="a" style="left:1223px;top:158px;width:84px;height:28px;border-radius:14px;background:#4086ec"></div>
<svg style="left:1229px;top:164px" width="16" height="15" viewBox="0 0 16 15"><path d="M5 5V0.6H14.4V11.4H8" stroke="#fff" stroke-width="1.1" fill="none"/><path d="M5.6 3.6H12.4V9.4H5.6Z" stroke="#fff" stroke-width="1" fill="none"/><path d="M6.5 5L7.6 8.5L9 6.3L10.4 8.5L11.5 5" stroke="#fff" stroke-width="0.9" fill="none"/><path d="M1 7V12.5H5.5M3.8 10.5L5.8 12.5L3.8 14.5" stroke="#fff" stroke-width="1.1" fill="none"/></svg>
<div class="t" style="left:1249px;top:166px;font-size:12px;color:#fff">转为Word</div>
<div id="vs" class="a"></div>
  <div id="hs" class="a"></div>
  <div id="status" class="a"></div>
<svg style="left:10px;top:157px" width="16" height="4" viewBox="0 0 16 4"><path d="M0 0.5H16M0 3.5H16" stroke="#b8b8b8" stroke-width="1"/></svg>
<svg style="left:9px;top:182px" width="15" height="15" viewBox="0 0 15 15"><rect x="0.6" y="0.6" width="13.8" height="13.8" rx="1.5" stroke="#3a3a3a" stroke-width="1.2" fill="none"/><path d="M3 4.5H4M3 7.5H4M3 10.5H4M5.5 4.5H12M5.5 7.5H12M5.5 10.5H12" stroke="#3a3a3a" stroke-width="1.1"/></svg>
<svg style="left:10px;top:218px" width="14" height="16" viewBox="0 0 14 16"><rect x="0.6" y="0.6" width="12.8" height="11" stroke="#3a3a3a" stroke-width="1.2" fill="none"/><circle cx="4" cy="3.8" r="1" fill="#3a3a3a"/><path d="M1 10L5 6.5L8 8.5L13 11.5" stroke="#3a3a3a" stroke-width="1.1" fill="none"/><path d="M0.6 15.5V14Q0.6 13.4 1.5 13.4H12.5Q13.4 13.4 13.4 14V15.5" stroke="#3a3a3a" stroke-width="1.1" fill="none"/></svg>
<svg style="left:8px;top:254px" width="17" height="16" viewBox="0 0 17 16"><path d="M4.6 6V0.6H12L15.4 4V14.4H7" stroke="#3a3a3a" stroke-width="1.1" fill="none"/><path d="M7 3.5L8.3 9L10 6L11.7 9L13 3.5" stroke="#3a3a3a" stroke-width="1.1" fill="none"/><path d="M1 8V13H5M3.5 11L5.3 13L3.5 15" stroke="#3a3a3a" stroke-width="1.1" fill="none"/></svg>
<div class="a" style="left:37px;top:146px;width:1275px;height:6px;background:linear-gradient(#ececec,#fff);"></div>
<svg style="left:1316px;top:155px" width="8" height="4" viewBox="0 0 8 4"><path d="M0 4H8L4 0Z" fill="#6d6d6d"/></svg>
<div class="a" style="left:1312px;top:479px;width:14px;height:32px;border:1px solid #8c8c8c;border-radius:7px;background:#e8e8e8"></div>
<svg style="left:44px;top:689px" width="4" height="7" viewBox="0 0 4 7"><path d="M4 0V7L0 3.5Z" fill="#6d6d6d"/></svg>
<svg style="left:1300px;top:689px" width="4" height="7" viewBox="0 0 4 7"><path d="M0 0V7L4 3.5Z" fill="#6d6d6d"/></svg>
<svg style="left:1316px;top:689px" width="8" height="4" viewBox="0 0 8 4"><path d="M0 0H8L4 4Z" fill="#6d6d6d"/></svg>
<div class="a" style="left:154px;top:685px;width:1059px;height:14px;border:1px solid #8c8c8c;border-radius:7px;background:#e8e8e8"></div>
<div class="a" style="left:0;top:699px;width:1326px;height:1px;background:#d4d4d4"></div>
<div class="t" style="left:15px;top:708px;font-size:12px;color:#555">页码：第514页</div>
<svg style="left:806px;top:706px" width="17" height="16" viewBox="0 0 17 16"><path d="M1 10.5C3 7 5.5 5.5 8.5 5.5S14 7 16 10.5C14 14 11.5 15.4 8.5 15.4S3 14 1 10.5Z" stroke="#444" stroke-width="1.1" fill="none"/><circle cx="8.5" cy="10.5" r="2.6" stroke="#444" stroke-width="1.1" fill="none"/><path d="M8.5 0.5V3M3 2L4.5 4M14 2L12.5 4" stroke="#444" stroke-width="1"/></svg>
<div class="sep" style="left:837px;top:703px;height:22px"></div>
<div class="a" style="left:847px;top:702px;width:23px;height:24px;border-radius:3px;background:#c2c2c2"></div>
<div class="a" style="left:873px;top:702px;width:24px;height:24px;border-radius:3px;background:#c2c2c2"></div>
<svg style="left:851px;top:706px" width="15" height="16" viewBox="0 0 15 16"><rect x="0.6" y="0.6" width="13.8" height="5.4" rx="1" stroke="#3a3a3a" stroke-width="1.1" fill="none"/><path d="M1.6 8.4H10.5L14.4 11.6V14.4Q14.4 15.4 13.4 15.4H1.6Q0.6 15.4 0.6 14.4V9.4Q0.6 8.4 1.6 8.4Z" stroke="#3a3a3a" stroke-width="1.1" fill="none"/><path d="M10.7 8.4L14.4 11.4V9.6Q14.4 8.4 13 8.4Z" fill="#3a3a3a"/></svg>
<svg style="left:878px;top:706px" width="14" height="16" viewBox="0 0 14 16"><path d="M1.6 0.6H9.8L13.4 4.2V14.4Q13.4 15.4 12.4 15.4H1.6Q0.6 15.4 0.6 14.4V1.6Q0.6 0.6 1.6 0.6Z" stroke="#3a3a3a" stroke-width="1.1" fill="none"/><path d="M10 0.6L13.4 4V2.2Q13.4 0.6 11.8 0.6Z" fill="#3a3a3a"/></svg>
<svg style="left:903px;top:706px" width="15" height="16" viewBox="0 0 15 16"><path d="M1.6 0.6H4.5L6.4 2.5V14.4Q6.4 15.4 5.4 15.4H1.6Q0.6 15.4 0.6 14.4V1.6Q0.6 0.6 1.6 0.6Z M9.6 0.6H12.5L14.4 2.5V14.4Q14.4 15.4 13.4 15.4H9.6Q8.6 15.4 8.6 14.4V1.6Q8.6 0.6 9.6 0.6Z" stroke="#3a3a3a" stroke-width="1.1" fill="none"/></svg>
<div class="sep" style="left:933px;top:703px;height:22px"></div>
<svg style="left:949px;top:707px" width="14" height="15" viewBox="0 0 14 15"><path d="M1.8 0.6H10L13.4 4V13.2Q13.4 14.4 12.2 14.4H1.8Q0.6 14.4 0.6 13.2V1.8Q0.6 0.6 1.8 0.6Z" stroke="#3a3a3a" stroke-width="1.1" fill="none" stroke-linejoin="round"/><path d="M10.2 0.6L13.4 3.8V2.4Q13.4 0.6 11.6 0.6Z" fill="#3a3a3a"/><path d="M3.2 5.6L4.2 5V10.6M9.4 5.6L10.4 5V10.6M6.8 6.4V7.2M6.8 8.6V9.4" stroke="#3a3a3a" stroke-width="0.9" fill="none"/></svg>
<svg style="left:975px;top:707px" width="14" height="15" viewBox="0 0 14 15"><path d="M1.8 0.6H10L13.4 4V13.2Q13.4 14.4 12.2 14.4H1.8Q0.6 14.4 0.6 13.2V1.8Q0.6 0.6 1.8 0.6Z" stroke="#3a3a3a" stroke-width="1.1" fill="none" stroke-linejoin="round"/><path d="M10.2 0.6L13.4 3.8V2.4Q13.4 0.6 11.6 0.6Z" fill="#3a3a3a"/><path d="M5.6 4.6L7 3.4L8.4 4.6M5.6 10.4L7 11.6L8.4 10.4M4 6.1L2.8 7.5L4 8.9M10 6.1L11.2 7.5L10 8.9" stroke="#3a3a3a" stroke-width="0.9" fill="none"/></svg>
<svg style="left:1001px;top:707px" width="14" height="15" viewBox="0 0 14 15"><path d="M1.8 0.6H10L13.4 4V13.2Q13.4 14.4 12.2 14.4H1.8Q0.6 14.4 0.6 13.2V1.8Q0.6 0.6 1.8 0.6Z" stroke="#3a3a3a" stroke-width="1.1" fill="none" stroke-linejoin="round"/><path d="M10.2 0.6L13.4 3.8V2.4Q13.4 0.6 11.6 0.6Z" fill="#3a3a3a"/><path d="M5 5.5L3.2 7.5L5 9.5M9 5.5L10.8 7.5L9 9.5" stroke="#3a3a3a" stroke-width="0.9" fill="none"/></svg>
<div class="sep" style="left:1030px;top:703px;height:22px"></div>
<div class="t" style="left:1064px;top:707px;font-size:13px;color:#333">150%</div>
</div>

<div id="task" class="a"></div>
<div class="a" style="left:1150px;top:700px;width:216px;height:28px;background:#fff;border:1px solid #8fb4ec"></div>
<svg style="left:1156px;top:703px" width="20" height="20" viewBox="0 0 20 20"><circle cx="10" cy="10" r="10" fill="#2a76dd"/><path d="M10 4C7.3 4 6 6 6 8.5V10.5C5.3 11.3 4.8 12.5 5 13.5C5.8 13.8 6.5 13.2 6.8 12.8C7.3 14 8.3 15 10 15S12.7 14 13.2 12.8C13.5 13.2 14.2 13.8 15 13.5C15.2 12.5 14.7 11.3 14 10.5V8.5C14 6 12.7 4 10 4Z" fill="#fff"/></svg>
<svg style="left:1182px;top:705px" width="14" height="16" viewBox="0 0 14 16"><path d="M1 4.5H13V11.5H1Z M7 0V16" stroke="#2a76dd" stroke-width="2.2" fill="none"/></svg>
<svg style="left:1205px;top:707px" width="14" height="13" viewBox="0 0 14 13"><circle cx="3" cy="3" r="2" stroke="#2a76dd" stroke-width="1.4" fill="none"/><path d="M10.5 6.5C11.5 6.5 12.2 7.3 12 8.5C11.7 10 10.5 11.5 9 12.3" stroke="#2a76dd" stroke-width="2" fill="none"/><circle cx="10.5" cy="8" r="1.6" fill="#2a76dd"/></svg>
<svg style="left:1227px;top:705px" width="16" height="16" viewBox="0 0 16 16"><circle cx="8" cy="8" r="7" stroke="#2a76dd" stroke-width="1.5" fill="none"/><circle cx="5.5" cy="6.3" r="1" fill="#2a76dd"/><circle cx="10.5" cy="6.3" r="1" fill="#2a76dd"/><path d="M4.5 9.5C5.5 11.5 10.5 11.5 11.5 9.5" stroke="#2a76dd" stroke-width="1.4" fill="none"/></svg>
<svg style="left:1251px;top:705px" width="15" height="16" viewBox="0 0 15 16"><path d="M2.5 1L10.5 12M12.5 1L4.5 12" stroke="#2a76dd" stroke-width="1.8"/><circle cx="3.5" cy="13" r="2.3" stroke="#2a76dd" stroke-width="1.6" fill="none"/><circle cx="11.5" cy="13" r="2.3" stroke="#2a76dd" stroke-width="1.6" fill="none"/></svg>
<svg style="left:1273px;top:707px" width="17" height="13" viewBox="0 0 17 13"><rect x="0.8" y="0.8" width="15.4" height="11.4" rx="1.5" stroke="#2a76dd" stroke-width="1.6" fill="none"/><path d="M3 4H5M6.5 4H8.5M10 4H12M13 4H14M3 6.5H5M6.5 6.5H8.5M10 6.5H14M4 9H13" stroke="#2a76dd" stroke-width="1.4"/></svg>
<svg style="left:1298px;top:705px" width="13" height="16" viewBox="0 0 13 16"><circle cx="6.5" cy="4" r="3.3" fill="#bcd4f4"/><path d="M0.5 15.5C0.5 11 3 9 6.5 9S12.5 11 12.5 15.5Z" fill="#bcd4f4"/></svg>
<svg style="left:1319px;top:706px" width="15" height="14" viewBox="0 0 15 14"><path d="M4.5 0.5L0.5 3.5L2 7L3.5 6.5V13.5H11.5V6.5L13 7L14.5 3.5L10.5 0.5C10 2 9 2.7 7.5 2.7S5 2 4.5 0.5Z" fill="#2a76dd"/></svg>
<svg style="left:1343px;top:705px" width="15" height="16" viewBox="0 0 15 16"><path d="M6 0.5H9L9.5 2.5L11.3 3.5L13.3 2.8L14.8 5.3L13.2 6.7V9.3L14.8 10.7L13.3 13.2L11.3 12.5L9.5 13.5L9 15.5H6L5.5 13.5L3.7 12.5L1.7 13.2L0.2 10.7L1.8 9.3V6.7L0.2 5.3L1.7 2.8L3.7 3.5L5.5 2.5Z" fill="#2a76dd"/><circle cx="7.5" cy="8" r="2.6" fill="#fff"/></svg>
<svg style="left:16px;top:740px" width="16" height="16" viewBox="0 0 16 16"><path d="M0 2.2L6.6 1.3V7.6H0Z M7.4 1.2L16 0V7.6H7.4Z M0 8.4H6.6V14.7L0 13.8Z M7.4 8.4H16V16L7.4 14.8Z" fill="#fff"/></svg>
<svg style="left:64px;top:740px" width="16" height="16" viewBox="0 0 16 16"><circle cx="8" cy="8" r="6.8" stroke="#fff" stroke-width="1.6" fill="none"/></svg>
<svg style="left:111px;top:740px" width="18" height="16" viewBox="0 0 18 16"><path d="M0.5 3.5H12.5V12.5H0.5Z M0 0.8H13M0 15.2H13" stroke="#fff" stroke-width="1.4" fill="none"/><path d="M15.5 0V3M15.5 6V10M15.5 13V16" stroke="#fff" stroke-width="1.6"/></svg>
<svg style="left:161px;top:738px" width="21" height="20" viewBox="0 0 21 20"><path d="M2 12C2 5 7 0.5 12 0.5C17.5 0.5 20.5 4.5 20.5 10V11.5H7C7.3 15 10 16.8 13.5 16.8C16 16.8 18 16 19.5 15V19C17.5 19.8 15.5 20 13 20C6.5 20 3.5 16 3.5 12.5C4.5 9.5 7 8 7 8.5H14.8C14.5 5.5 12.5 4.5 11 4.5C7 4.5 4 7.5 2 12Z" fill="#1a7ddb"/></svg>
<svg style="left:209px;top:739px" width="22" height="18" viewBox="0 0 22 18"><path d="M0 2Q0 0.5 1.5 0.5H7.5L9.5 2.5H20.5Q22 2.5 22 4V16.5Q22 18 20.5 18H1.5Q0 18 0 16.5Z" fill="#e8b632"/><path d="M0 5.5H22V16.5Q22 18 20.5 18H1.5Q0 18 0 16.5Z" fill="#fcd66e"/><path d="M7 12H15V18H13V14.5H9V18H7Z" fill="#2a8ad8"/></svg>
<svg style="left:257px;top:738px" width="24" height="21" viewBox="0 0 24 21"><circle cx="10.5" cy="10" r="8.5" stroke="#1b88e6" stroke-width="3.4" fill="none"/><path d="M9 20C9 17 11 15.5 13 15.5C14 13.5 16 13 18 13.5C20 14 21 15.5 21 17C23 17 24 18.5 24 19.5C24 20.5 23 21 22 21H10C9.5 21 9 20.5 9 20Z" fill="#fff"/></svg>
<svg style="left:307px;top:737px" width="22" height="22" viewBox="0 0 22 22"><rect x="0" y="0" width="22" height="22" rx="2" fill="#f6d01a"/><circle cx="11" cy="8.5" r="6" fill="#fff"/><path d="M9 5.5V11.5L14 8.5Z" fill="#f6c800"/><text x="11" y="19.5" font-size="5.5" font-family="Liberation Sans" font-weight="bold" text-anchor="middle" fill="#222">Player</text></svg>
<svg style="left:356px;top:738px" width="22" height="21" viewBox="0 0 22 21"><circle cx="11" cy="10.5" r="10.5" fill="#2b9af3"/><circle cx="11" cy="10.5" r="9" fill="#fff"/><circle cx="11" cy="10.5" r="7.5" fill="#2b9af3"/><path d="M5.5 10H16.5C16.5 6.5 14 4.8 11 4.8S5.5 7 5.5 10.5S8 16.2 11 16.2C13.5 16.2 15.5 15 16.2 13H12.5C12 13.8 11.5 14 11 14C9 14 8 12.5 8 11.8H16.5" fill="#fff"/></svg>
<svg style="left:405px;top:737px" width="22" height="22" viewBox="0 0 22 22"><circle cx="11" cy="11" r="11" fill="#db4437"/><path d="M11 11L1.5 16.5A11 11 0 0 0 13 21.8Z" fill="#0f9d58"/><path d="M11 11L13 21.8A11 11 0 0 0 20.5 5.5H11Z" fill="#fdc42d"/><path d="M11 5.5H20.5A11 11 0 0 0 1.5 5.5L6.2 13.8Z" fill="#db4437"/><path d="M11 11L6.2 13.8L1.5 16.5A11 11 0 0 1 1.5 5.5Z" fill="#0f9d58"/><circle cx="11" cy="11" r="5" fill="#fff"/><circle cx="11" cy="11" r="4" fill="#4285f4"/></svg>
<svg style="left:453px;top:737px" width="24" height="23" viewBox="0 0 24 23"><rect x="0" y="0" width="24" height="23" rx="2" fill="#e21d1d"/><text x="12" y="16" font-size="11" font-family="Liberation Sans" text-anchor="middle" fill="#fff">有道</text></svg>
<div class="a" style="left:490px;top:728px;width:47px;height:40px;background:#4a3f3d"></div>
<div class="a" style="left:537px;top:728px;width:3px;height:40px;background:#3a302e"></div>
<svg style="left:502px;top:737px" width="23" height="22" viewBox="0 0 23 22"><path d="M6 0.5H17L22.5 11L17 21.5H6L0.5 11Z" fill="#1d7ae0"/><path d="M5 7L8.5 15.5L11.5 9.5L14.5 15.5L18 7" stroke="#fff" stroke-width="1.8" fill="none" stroke-linejoin="round"/></svg>
<svg style="left:551px;top:737px" width="24" height="23" viewBox="0 0 24 23"><rect x="0" y="0" width="24" height="23" fill="#f4ded8"/><path d="M4 21L10.5 2.5H15L20 21H16.5L15 16H10L8.5 21Z M11 12.5H14L12.8 7.5Z" fill="#c8262b"/></svg>
<svg style="left:600px;top:737px" width="25" height="23" viewBox="0 0 25 23"><path d="M3 6L18 0L25 4V19L12 23L0 17Z" fill="#8a4bd6"/><path d="M3 6L18 0L20 11L6 16Z" fill="#b37ff0"/><path d="M9 18L13.5 8H15.5L16 18H14V15.5H12L10.8 18Z M12.5 14H14L14.2 10.5Z" fill="#1e1e1e"/></svg>
<svg style="left:649px;top:737px" width="24" height="23" viewBox="0 0 24 23"><rect x="0" y="0" width="24" height="23" fill="#fff"/><rect x="1.5" y="1.5" width="21" height="20" fill="#1b2650"/><path d="M3 4C8 7 12 13 14 20H9C8 14 6 9 3 6Z" fill="#6fb5f5"/><circle cx="16" cy="11" r="4" fill="#f08a26"/><circle cx="16" cy="11" r="1.8" fill="#ffd96a"/></svg>
<div class="a" style="left:151px;top:765px;width:40px;height:3px;background:#f0a9a0"></div>
<div class="a" style="left:200px;top:765px;width:40px;height:3px;background:#f0a9a0"></div>
<div class="a" style="left:490px;top:765px;width:45px;height:3px;background:#f0a9a0"></div>
<div class="a" style="left:542px;top:765px;width:41px;height:3px;background:#f0a9a0"></div>
<div class="a" style="left:592px;top:765px;width:40px;height:3px;background:#f0a9a0"></div>
<div class="a" style="left:641px;top:765px;width:40px;height:3px;background:#f0a9a0"></div>
<svg style="left:983px;top:740px" width="16" height="15" viewBox="0 0 16 15"><circle cx="10.5" cy="3.8" r="3" stroke="#fff" stroke-width="1.2" fill="none"/><path d="M5.5 14C5.5 10 7.5 8 10.5 8S15.5 10 15.5 14" stroke="#fff" stroke-width="1.2" fill="none"/><circle cx="4.5" cy="7.5" r="2.5" stroke="#fff" stroke-width="1.2" fill="none"/><path d="M0.6 15C0.6 12 2.3 11 4.5 11" stroke="#fff" stroke-width="1.2" fill="none"/></svg>
<svg style="left:1020px;top:743px" width="13" height="8" viewBox="0 0 13 8"><path d="M0.5 7.5L6.5 1L12.5 7.5" stroke="#fff" stroke-width="1.3" fill="none"/></svg>
<svg style="left:1042px;top:739px" width="17" height="18" viewBox="0 0 17 18"><rect x="0" y="0" width="17" height="17" rx="2" fill="#8a8a8a"/><path d="M4 5H11V10H4Z M7.5 2V14" stroke="#eee" stroke-width="1.4" fill="none"/><circle cx="13" cy="13.5" r="3.8" fill="#e02020"/><path d="M11.5 12L14.5 15M14.5 12L11.5 15" stroke="#fff" stroke-width="1"/></svg>
<svg style="left:1066px;top:738px" width="15" height="19" viewBox="0 0 15 19"><ellipse cx="7.5" cy="11" rx="6" ry="7.5" fill="#111"/><ellipse cx="7.5" cy="12.5" rx="4" ry="5.5" fill="#fff"/><circle cx="5.5" cy="6.5" r="1.2" fill="#fff"/><circle cx="9.5" cy="6.5" r="1.2" fill="#fff"/><path d="M4 1.5C6 -0.5 10 0 12 2L10 4Z" fill="#fff"/><path d="M5.5 8.5H9.5L7.5 10Z" fill="#f5b800"/></svg>
<svg style="left:1089px;top:741px" width="18" height="13" viewBox="0 0 18 13"><path d="M5.5 2.5H16.5V11.5H5.5Z" stroke="#fff" stroke-width="1.2" fill="none"/><path d="M16.5 5V9H18V5Z" fill="#fff"/><path d="M8 4.5H14V9.5H8Z" fill="#fff"/><path d="M1 5.5H5.5M1 8.5H5.5M2.5 3V5.5M2.5 8.5V11" stroke="#fff" stroke-width="1.2"/></svg>
<svg style="left:1114px;top:739px" width="16" height="17" viewBox="0 0 16 17"><path d="M3 16A12.5 12.5 0 0 1 15.5 3.5M6.5 16A9 9 0 0 1 15.5 7M10 16A5.5 5.5 0 0 1 15.5 10.5" stroke="#9a9a9a" stroke-width="1.3" fill="none"/><circle cx="15" cy="15.5" r="1.5" fill="#9a9a9a"/><text x="0" y="7" font-size="10" fill="#fff" font-family="Liberation Sans">*</text></svg>
<svg style="left:1138px;top:741px" width="15" height="14" viewBox="0 0 15 14"><path d="M0.6 4.5H3.5L7.5 1V13L3.5 9.5H0.6Z" stroke="#fff" stroke-width="1.1" fill="none"/><path d="M9.5 5L14 9.5M14 5L9.5 9.5" stroke="#fff" stroke-width="1.1"/></svg>
<svg style="left:1162px;top:738px" width="17" height="19" viewBox="0 0 17 19"><path d="M8.5 0.5C6 2 3 2.5 0.5 2.5V9C0.5 14 4 17 8.5 18.5C13 17 16.5 14 16.5 9V2.5C14 2.5 11 2 8.5 0.5Z" fill="#1e86e8"/><path d="M4 7.5L8.5 11.5L13 7.5" stroke="#fff" stroke-width="2" fill="none"/></svg>
<div class="t" style="left:1186px;top:741px;font-size:14px;color:#fff">中</div>
<svg style="left:1214px;top:739px" width="17" height="17" viewBox="0 0 17 17"><rect x="0" y="0" width="17" height="17" rx="2" fill="#2b88e6"/><path d="M8.5 3C6.5 3 5.3 4.5 5.3 6.5V8C4.8 8.6 4.4 9.5 4.5 10.3C5 10.5 5.5 10.1 5.8 9.8C6.2 11 7.2 12 8.5 12S10.8 11 11.2 9.8C11.5 10.1 12 10.5 12.5 10.3C12.6 9.5 12.2 8.6 11.7 8V6.5C11.7 4.5 10.5 3 8.5 3Z M5 13H12V14H5Z" fill="#fff"/></svg>
<div class="t" style="left:1262px;top:732px;font-size:12px;color:#fff">16:35</div>
<div class="t" style="left:1247px;top:751px;font-size:12px;color:#fff">2019/4/23</div>
<svg style="left:1325px;top:739px" width="25" height="22" viewBox="0 0 25 22"><path d="M0.6 0.6H14.4V11.4H6L3 14V11.4H0.6Z" stroke="#fff" stroke-width="1.2" fill="none"/><path d="M3 4H12M3 6.5H12M3 9H9" stroke="#fff" stroke-width="1"/><circle cx="16" cy="13" r="7.5" fill="#2b2b2b" stroke="#9a9a9a" stroke-width="1"/><text x="16" y="17" font-size="11" fill="#fff" text-anchor="middle" font-family="Liberation Sans" font-weight="bold">3</text></svg>

</body></html>
